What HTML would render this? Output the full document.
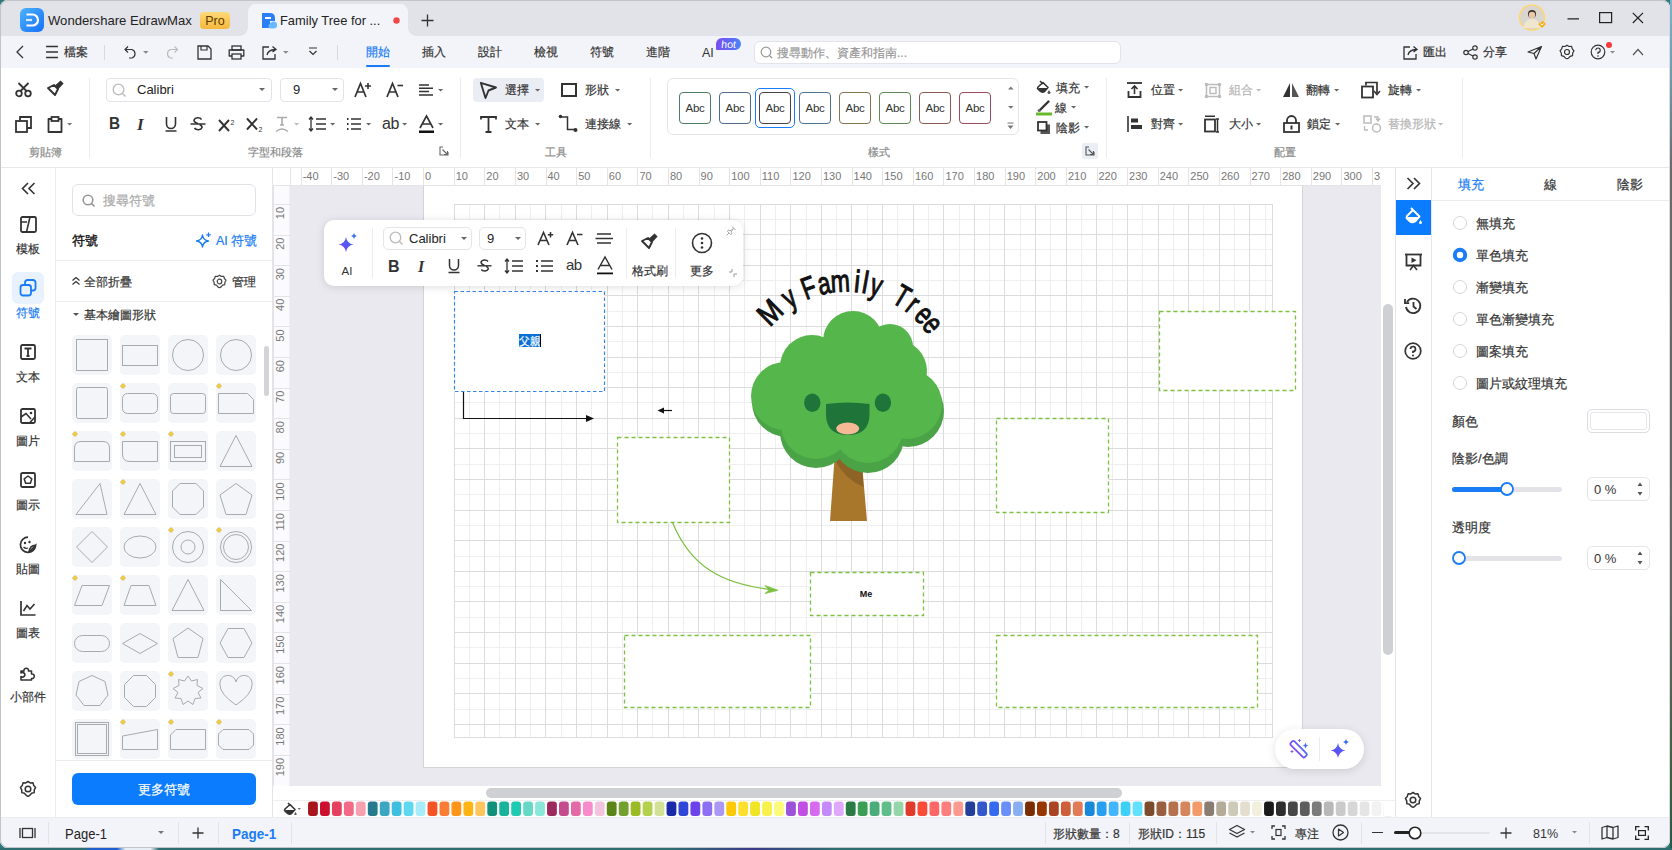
<!DOCTYPE html>
<html><head><meta charset="utf-8">
<style>
*{box-sizing:border-box;margin:0;padding:0}
html,body{width:1672px;height:850px;overflow:hidden;font-family:"Liberation Sans",sans-serif;color:#333}
body{background:#2f7a78;position:relative}
.a{position:absolute}
.t{position:absolute;white-space:nowrap;line-height:1;-webkit-text-stroke:0.2px currentColor}
svg{position:absolute;overflow:visible}

</style></head><body>
<div class="a" style="left:0;top:0;width:1670px;height:848px;border-radius:8px;overflow:hidden;background:#fff">
<div class="a" style="left:0px;top:0px;width:1670px;height:36px;background:#e2e3e8"></div>
<div class="a" style="left:0px;top:36px;width:1670px;height:32px;background:#f3f4f9"></div>
<div class="a" style="left:0px;top:68px;width:1670px;height:100px;background:#fff;border-bottom:1px solid #e8e8ec"></div>
<div class="a" style="left:0px;top:817px;width:1670px;height:31px;background:#f3f4f9;border-top:1px solid #ececf0"></div>
<div class="a" style="left:20px;top:8px;width:24px;height:24px;border-radius:6px;background:linear-gradient(135deg,#4cb2ff,#1670f7)"></div>
<svg style="left:20px;top:8px;" width="24" height="24" viewBox="0 0 24 24"><path d="M6.5 6.5 H12.5 A5.5 5.5 0 0 1 12.5 17.5 H6.5" fill="none" stroke="#fff" stroke-width="2.2"/><path d="M6 12 H12" stroke="#fff" stroke-width="2.2" opacity="0.8"/></svg>
<div class="t" style="left:48px;top:8.5px;height:24px;line-height:24px;font-size:13.1px;color:#222;font-weight:normal;-webkit-text-stroke:0;">Wondershare EdrawMax</div>
<div class="a" style="left:200px;top:12px;width:30px;height:17px;border-radius:4px;background:linear-gradient(180deg,#ffd978,#f5b73c)"></div>
<div class="t" style="left:200.0px;width:30px;text-align:center;top:8.5px;height:24px;line-height:24px;font-size:12.5px;color:#5a3c00;font-weight:normal;-webkit-text-stroke:0;">Pro</div>
<div class="a" style="left:248px;top:4px;width:160px;height:32px;background:#f3f4f9;border-radius:8px 8px 0 0"></div>
<div class="a" style="left:240px;top:28px;width:8px;height:8px;background:radial-gradient(circle at 0 0,#e2e3e8 7.5px,#f3f4f9 8px)"></div>
<div class="a" style="left:408px;top:28px;width:8px;height:8px;background:radial-gradient(circle at 100% 0,#e2e3e8 7.5px,#f3f4f9 8px)"></div>
<svg style="left:261px;top:12px;" width="17" height="17" viewBox="0 0 17 17"><path d="M1 1 H9 Q14 1 14 6 V9 H1 Z M1 9 H9 V16 H1 Z" fill="#2a7ff6"/><rect x="4" y="5" width="6" height="2" fill="#fff"/><circle cx="12.5" cy="13" r="3.6" fill="#6ab8ff"/><circle cx="10" cy="14" r="2.5" fill="#6ab8ff"/></svg>
<div class="t" style="left:280px;top:8.5px;height:24px;line-height:24px;font-size:12.9px;color:#222;font-weight:normal;-webkit-text-stroke:0;">Family Tree for ...</div>
<svg style="left:393px;top:17px;" width="7" height="7" viewBox="0 0 7 7"><circle cx="3.5" cy="3.5" r="3.2" fill="#f04848"/></svg>
<svg style="left:421px;top:14px;" width="13" height="13" viewBox="0 0 13 13"><path d="M6.5 0.5 V12.5 M0.5 6.5 H12.5" stroke="#333" stroke-width="1.3"/></svg>
<svg style="left:1518px;top:4px;" width="30" height="30" viewBox="0 0 30 30"><circle cx="14" cy="13.5" r="12.5" fill="#d9d6cf" stroke="#ffd677" stroke-width="1.6"/><path d="M5 24 Q7 15 14 15 Q21 15 23 24 Z" fill="#efe6cf"/><circle cx="14" cy="10" r="4" fill="#3a3028"/><circle cx="14" cy="11" r="3.2" fill="#e8c8a8"/><path d="M20 20 L25 17 L28 20 L24 24 Z" fill="#f5b020"/><path d="M22.5 19.5 L24 21 L25.6 19.5" stroke="#fff" stroke-width="1" fill="none"/></svg>
<svg style="left:1567px;top:18px;" width="14" height="2" viewBox="0 0 14 2"><path d="M0.5 0.8 H12" stroke="#222" stroke-width="1.2"/></svg>
<svg style="left:1599px;top:12px;" width="14" height="12" viewBox="0 0 14 12"><rect x="0.6" y="0.6" width="12" height="10" fill="none" stroke="#222" stroke-width="1.2"/></svg>
<svg style="left:1632px;top:12px;" width="12" height="12" viewBox="0 0 12 12"><path d="M0.8 0.8 L11 11 M11 0.8 L0.8 11" stroke="#222" stroke-width="1.2"/></svg>
<svg style="left:15px;top:45px;" width="10" height="14" viewBox="0 0 10 14"><path d="M8 1 L2 7 L8 13" fill="none" stroke="#333" stroke-width="1.3"/></svg>
<svg style="left:45px;top:45px;" width="14" height="14" viewBox="0 0 14 14"><path d="M1 1.5 H13 M1 7 H13 M1 12.5 H13" stroke="#333" stroke-width="1.3"/></svg>
<div class="t" style="left:64px;top:40.0px;height:24px;line-height:24px;font-size:12px;color:#333;font-weight:normal;">檔案</div>
<div class="a" style="left:104px;top:45px;width:1px;height:15px;background:#d8d9de"></div>
<svg style="left:124px;top:45px;" width="14" height="14" viewBox="0 0 14 14"><path d="M4 1.5 L1 4.5 L4 7.5" fill="none" stroke="#333" stroke-width="1.2"/><path d="M1.5 4.5 H8 A4.5 4.5 0 0 1 8 13 H5" fill="none" stroke="#333" stroke-width="1.2"/></svg>
<svg style="left:143.2px;top:50.6px;" width="5.6" height="3.8" viewBox="0 0 5.6 3.8"><path d="M0 0 L5.6 0 L2.8 2.8 Z" fill="#888"/></svg>
<svg style="left:165px;top:45px;" width="14" height="14" viewBox="0 0 14 14"><path d="M9.5 1.5 L12.5 4.5 L9.5 7.5" fill="none" stroke="#bbb" stroke-width="1.2"/><path d="M12 4.5 H5.5 A4.5 4.5 0 0 0 5.5 13 H8" fill="none" stroke="#bbb" stroke-width="1.2"/></svg>
<svg style="left:197px;top:45px;" width="15" height="15" viewBox="0 0 15 15"><path d="M1 1 H11 L14 4 V14 H1 Z" fill="none" stroke="#333" stroke-width="1.3"/><path d="M4 1 V5 H10 V1" fill="none" stroke="#333" stroke-width="1.2"/></svg>
<svg style="left:228px;top:45px;" width="17" height="15" viewBox="0 0 17 15"><rect x="4" y="1" width="9" height="4" fill="none" stroke="#333" stroke-width="1.3"/><path d="M4 11 H1.2 V5 H15.8 V11 H13" fill="none" stroke="#333" stroke-width="1.3" stroke-linejoin="round"/><rect x="4" y="9" width="9" height="5" fill="none" stroke="#333" stroke-width="1.3"/></svg>
<svg style="left:262px;top:45px;" width="16" height="15" viewBox="0 0 16 15"><path d="M7 2 H1 V14 H13 V9" fill="none" stroke="#333" stroke-width="1.3"/><path d="M5 10 Q6 5 13 4.5 M10.5 1.5 L14 4.5 L10.5 7" fill="none" stroke="#333" stroke-width="1.3"/></svg>
<svg style="left:283.2px;top:50.6px;" width="5.6" height="3.8" viewBox="0 0 5.6 3.8"><path d="M0 0 L5.6 0 L2.8 2.8 Z" fill="#888"/></svg>
<svg style="left:308px;top:47px;" width="10" height="10" viewBox="0 0 10 10"><path d="M1 1 H9 M1.5 4 L5 7.5 L8.5 4" fill="none" stroke="#333" stroke-width="1.2"/></svg>
<div class="a" style="left:337px;top:45px;width:1px;height:15px;background:#d8d9de"></div>
<div class="t" style="left:366px;top:40.0px;height:24px;line-height:24px;font-size:12px;color:#1a7cf6;font-weight:normal;">開始</div>
<div class="t" style="left:422px;top:40.0px;height:24px;line-height:24px;font-size:12px;color:#333;font-weight:normal;">插入</div>
<div class="t" style="left:478px;top:40.0px;height:24px;line-height:24px;font-size:12px;color:#333;font-weight:normal;">設計</div>
<div class="t" style="left:534px;top:40.0px;height:24px;line-height:24px;font-size:12px;color:#333;font-weight:normal;">檢視</div>
<div class="t" style="left:590px;top:40.0px;height:24px;line-height:24px;font-size:12px;color:#333;font-weight:normal;">符號</div>
<div class="t" style="left:646px;top:40.0px;height:24px;line-height:24px;font-size:12px;color:#333;font-weight:normal;">進階</div>
<div class="a" style="left:366px;top:65px;width:24px;height:2px;background:#1a7cf6;border-radius:1px"></div>
<div class="t" style="left:702px;top:40.5px;height:24px;line-height:24px;font-size:12.5px;color:#333;font-weight:normal;-webkit-text-stroke:0;">AI</div>
<div class="a" style="left:716px;top:38px;width:25px;height:12px;border-radius:6px 6px 6px 1px;background:linear-gradient(90deg,#7a4ef0,#5a6ff6 70%,#4b86f7)"></div>
<div class="t" style="left:716.0px;width:25px;text-align:center;top:32.0px;height:24px;line-height:24px;font-size:10.5px;color:#fff;font-weight:normal;-webkit-text-stroke:0;font-style:italic;transform:skewX(6deg)">hot</div>
<div class="a" style="left:754px;top:41px;width:367px;height:23px;background:#fff;border:1px solid #e3e4ea;border-radius:6px"></div>
<svg style="left:760px;top:46px;" width="13" height="13" viewBox="0 0 13 13"><circle cx="6" cy="6" r="4.8" fill="none" stroke="#999" stroke-width="1.2"/><path d="M9.5 9.5 L12 12" stroke="#999" stroke-width="1.2"/></svg>
<div class="t" style="left:777px;top:41.0px;height:24px;line-height:24px;font-size:12px;color:#999;font-weight:normal;">搜尋動作、資產和指南...</div>
<svg style="left:1403px;top:45px;" width="16" height="15" viewBox="0 0 16 15"><path d="M7 2 H1 V14 H13 V9" fill="none" stroke="#333" stroke-width="1.3"/><path d="M5 10 Q6 5 13 4.5 M10.5 1.5 L14 4.5 L10.5 7" fill="none" stroke="#333" stroke-width="1.3"/></svg>
<div class="t" style="left:1423px;top:40.0px;height:24px;line-height:24px;font-size:12px;color:#333;font-weight:normal;">匯出</div>
<svg style="left:1463px;top:45px;" width="16" height="15" viewBox="0 0 16 15"><circle cx="3" cy="7.5" r="2.2" fill="none" stroke="#333" stroke-width="1.2"/><circle cx="12" cy="3" r="2.2" fill="none" stroke="#333" stroke-width="1.2"/><circle cx="12" cy="12" r="2.2" fill="none" stroke="#333" stroke-width="1.2"/><path d="M5 6.5 L10 4 M5 8.5 L10 11" stroke="#333" stroke-width="1.2"/></svg>
<div class="t" style="left:1483px;top:40.0px;height:24px;line-height:24px;font-size:12px;color:#333;font-weight:normal;">分享</div>
<svg style="left:1527px;top:45px;" width="16" height="15" viewBox="0 0 16 15"><path d="M1 7 L14.5 1.5 L9 14 L7 8.5 Z M7 8.5 L14.5 1.5" fill="none" stroke="#333" stroke-width="1.2" stroke-linejoin="round"/></svg>
<svg style="left:1559px;top:44px;" width="16" height="16" viewBox="0 0 16 16"><path d="M8 1.2 L10 2.5 L12.6 2.3 L13.3 4.8 L15 6.8 L13.7 9 L13.6 11.6 L11.1 12.3 L9.3 14.3 L8 14.8 L6.7 14.3 L4.9 12.3 L2.4 11.6 L2.3 9 L1 6.8 L2.7 4.8 L3.4 2.3 L6 2.5 Z" fill="none" stroke="#333" stroke-width="1.2" stroke-linejoin="round"/><circle cx="8" cy="8" r="2.5" fill="none" stroke="#333" stroke-width="1.2"/></svg>
<svg style="left:1590px;top:44px;" width="16" height="16" viewBox="0 0 16 16"><circle cx="8" cy="8" r="6.8" fill="none" stroke="#333" stroke-width="1.2"/><path d="M5.8 6.2 A2.2 2.2 0 1 1 8 8.4 V10" fill="none" stroke="#333" stroke-width="1.2"/><circle cx="8" cy="12" r="0.8" fill="#333"/></svg>
<svg style="left:1606px;top:42px;" width="6" height="6" viewBox="0 0 6 6"><circle cx="3" cy="3" r="3" fill="#f23b3b"/></svg>
<svg style="left:1609.5px;top:51.25px;" width="5.0" height="3.5" viewBox="0 0 5.0 3.5"><path d="M0 0 L5.0 0 L2.5 2.5 Z" fill="#888"/></svg>
<svg style="left:1632px;top:48px;" width="12" height="8" viewBox="0 0 12 8"><path d="M1 7 L6 1.5 L11 7" fill="none" stroke="#555" stroke-width="1.2"/></svg>
<svg style="left:15px;top:82px;" width="18" height="16" viewBox="0 0 18 16"><circle cx="4" cy="11.5" r="2.8" fill="none" stroke="#333" stroke-width="1.8"/><circle cx="13" cy="11.5" r="2.8" fill="none" stroke="#333" stroke-width="1.8"/><path d="M5.5 9 L13.5 1 M11.5 9 L3.5 1" stroke="#333" stroke-width="1.8"/></svg>
<svg style="left:46px;top:80px;" width="18" height="18" viewBox="0 0 18 18"><path d="M2 8 L9 15 L12 9 L8 5 Z" fill="none" stroke="#333" stroke-width="1.9" stroke-linejoin="round"/><path d="M9 6.5 L14.5 1.5 L16.5 3.5 L11.5 9" fill="#333" stroke="#333" stroke-width="1.6"/></svg>
<svg style="left:15px;top:116px;" width="17" height="17" viewBox="0 0 17 17"><rect x="1" y="5" width="11" height="11" fill="none" stroke="#333" stroke-width="1.8"/><path d="M5 4.5 V1 H16 V12 H12.5" fill="none" stroke="#333" stroke-width="1.8"/></svg>
<svg style="left:47px;top:116px;" width="16" height="17" viewBox="0 0 16 17"><path d="M4 3 H1.5 V16 H14.5 V3 H12" fill="none" stroke="#333" stroke-width="1.8" stroke-linejoin="round"/><rect x="4.5" y="1" width="7" height="4" fill="none" stroke="#333" stroke-width="1.8"/></svg>
<svg style="left:66.9px;top:123.2px;" width="5.2" height="3.6" viewBox="0 0 5.2 3.6"><path d="M0 0 L5.2 0 L2.6 2.6 Z" fill="#777"/></svg>
<div class="t" style="left:15.5px;width:60px;text-align:center;top:140.0px;height:24px;line-height:24px;font-size:11px;color:#8a8a8a;font-weight:normal;">剪貼簿</div>
<div class="a" style="left:89px;top:78px;width:1px;height:80px;background:#ebebef"></div>
<div class="a" style="left:106px;top:78px;width:166px;height:24px;background:#fff;border:1px solid #e2e3e8;border-radius:4px"></div>
<svg style="left:112px;top:83px;" width="15" height="15" viewBox="0 0 15 15"><circle cx="6.5" cy="6.5" r="5.3" fill="none" stroke="#bbb" stroke-width="1.3"/><path d="M10.5 10.5 L13.5 13.5" stroke="#bbb" stroke-width="1.4"/></svg>
<div class="t" style="left:137px;top:78.0px;height:24px;line-height:24px;font-size:13px;color:#222;font-weight:normal;-webkit-text-stroke:0;">Calibri</div>
<svg style="left:259px;top:88.0px;" width="6" height="4" viewBox="0 0 6 4"><path d="M0 0 L6 0 L3 3 Z" fill="#666"/></svg>
<div class="a" style="left:280px;top:78px;width:64px;height:24px;background:#fff;border:1px solid #e2e3e8;border-radius:4px"></div>
<div class="t" style="left:293px;top:78.0px;height:24px;line-height:24px;font-size:13px;color:#222;font-weight:normal;-webkit-text-stroke:0;">9</div>
<svg style="left:332px;top:88.0px;" width="6" height="4" viewBox="0 0 6 4"><path d="M0 0 L6 0 L3 3 Z" fill="#666"/></svg>
<svg style="left:354px;top:82px;" width="18" height="16" viewBox="0 0 18 16"><path d="M1 15 L6.5 1.5 L12 15 M3 10 H10" fill="none" stroke="#333" stroke-width="1.7"/><path d="M14 1 V7 M11 4 H17" stroke="#333" stroke-width="1.6"/></svg>
<svg style="left:386px;top:82px;" width="18" height="16" viewBox="0 0 18 16"><path d="M1 15 L6.5 1.5 L12 15 M3 10 H10" fill="none" stroke="#333" stroke-width="1.7"/><path d="M11.5 3.5 H17" stroke="#333" stroke-width="1.6"/></svg>
<svg style="left:419px;top:84px;" width="15" height="12" viewBox="0 0 15 12"><path d="M0 1 H10 M0 4.3 H14 M0 7.6 H10 M0 11 H14" stroke="#333" stroke-width="1.5"/></svg>
<svg style="left:437.9px;top:88.7px;" width="5.2" height="3.6" viewBox="0 0 5.2 3.6"><path d="M0 0 L5.2 0 L2.6 2.6 Z" fill="#666"/></svg>
<div class="t" style="left:109px;top:112.0px;height:24px;line-height:24px;font-size:17px;color:#333;font-weight:normal;-webkit-text-stroke:0;font-weight:bold;transform:scaleX(0.9);transform-origin:left">B</div>
<div class="t" style="left:137px;top:112.5px;height:24px;line-height:24px;font-size:17px;color:#333;font-weight:normal;-webkit-text-stroke:0;font-family:'Liberation Serif';font-weight:bold"><i>I</i></div>
<svg style="left:165px;top:116px;" width="12" height="16" viewBox="0 0 12 16"><path d="M1.5 1 V8 A4.5 4.5 0 0 0 10.5 8 V1 M0.5 15 H11.5" fill="none" stroke="#333" stroke-width="1.6"/></svg>
<svg style="left:190px;top:116px;" width="16" height="16" viewBox="0 0 16 16"><path d="M11.5 3.5 A4 3 0 0 0 4 4 C4 6 6 7 8 7.5 M4.5 12 A4 3 0 0 0 12 11.5 C12 10 11 9 9.5 8.5" fill="none" stroke="#333" stroke-width="1.6"/><path d="M0.5 8 H15.5" stroke="#333" stroke-width="1.5"/></svg>
<svg style="left:218px;top:117px;" width="18" height="15" viewBox="0 0 18 15"><path d="M1 3 L11 14 M11 3 L1 14" stroke="#333" stroke-width="1.9"/><text x="12.5" y="8" font-size="7" fill="#333" font-family="Liberation Sans">2</text></svg>
<svg style="left:246px;top:117px;" width="18" height="16" viewBox="0 0 18 16"><path d="M1 1.5 L11 12.5 M11 1.5 L1 12.5" stroke="#333" stroke-width="1.9"/><text x="12.5" y="15" font-size="7" fill="#333" font-family="Liberation Sans">2</text></svg>
<svg style="left:275px;top:116px;" width="16" height="17" viewBox="0 0 16 17"><path d="M2 1.5 H12 M7 1.5 V9 M5 9 H9" fill="none" stroke="#aaa" stroke-width="1.6"/><path d="M1 15.5 Q7 10.5 13 15.5" fill="none" stroke="#aaa" stroke-width="1.4"/></svg>
<svg style="left:293.9px;top:123.2px;" width="5.2" height="3.6" viewBox="0 0 5.2 3.6"><path d="M0 0 L5.2 0 L2.6 2.6 Z" fill="#bbb"/></svg>
<svg style="left:308px;top:116px;" width="20" height="16" viewBox="0 0 20 16"><path d="M3 1 V15 M1 3.5 L3 1 L5 3.5 M1 12.5 L3 15 L5 12.5" fill="none" stroke="#333" stroke-width="1.3"/><path d="M8 3 H18 M8 8 H18 M8 13 H18" stroke="#333" stroke-width="1.7"/></svg>
<svg style="left:329.9px;top:123.2px;" width="5.2" height="3.6" viewBox="0 0 5.2 3.6"><path d="M0 0 L5.2 0 L2.6 2.6 Z" fill="#666"/></svg>
<svg style="left:346px;top:117px;" width="16" height="14" viewBox="0 0 16 14"><path d="M1 2 H2.5 M1 7 H2.5 M1 12 H2.5" stroke="#333" stroke-width="1.8"/><path d="M5 2 H15 M5 7 H15 M5 12 H15" stroke="#333" stroke-width="1.7"/></svg>
<svg style="left:365.9px;top:123.2px;" width="5.2" height="3.6" viewBox="0 0 5.2 3.6"><path d="M0 0 L5.2 0 L2.6 2.6 Z" fill="#666"/></svg>
<div class="t" style="left:382px;top:112.0px;height:24px;line-height:24px;font-size:16px;color:#333;font-weight:normal;-webkit-text-stroke:0;letter-spacing:-0.5px">ab</div>
<svg style="left:402.4px;top:123.2px;" width="5.2" height="3.6" viewBox="0 0 5.2 3.6"><path d="M0 0 L5.2 0 L2.6 2.6 Z" fill="#666"/></svg>
<svg style="left:418px;top:115px;" width="17" height="19" viewBox="0 0 17 19"><path d="M2 13 L8.5 1 L15 13 M4.5 9 H12.5" fill="none" stroke="#333" stroke-width="1.6"/><rect x="1" y="15.5" width="15" height="2.5" fill="#111"/></svg>
<svg style="left:438.4px;top:123.2px;" width="5.2" height="3.6" viewBox="0 0 5.2 3.6"><path d="M0 0 L5.2 0 L2.6 2.6 Z" fill="#666"/></svg>
<div class="t" style="left:235.5px;width:80px;text-align:center;top:140.0px;height:24px;line-height:24px;font-size:11px;color:#8a8a8a;font-weight:normal;">字型和段落</div>
<svg style="left:439px;top:146px;" width="10" height="10" viewBox="0 0 10 10"><path d="M4 1 H1 V9 H9 V6 M3.5 3.5 L8.5 8.5 M5 8.5 H8.5 V5" fill="none" stroke="#666" stroke-width="1.1"/></svg>
<div class="a" style="left:460px;top:78px;width:1px;height:80px;background:#ebebef"></div>
<div class="a" style="left:473px;top:78px;width:71px;height:24px;background:#ebedf5;border-radius:4px"></div>
<svg style="left:479px;top:81px;" width="19" height="19" viewBox="0 0 19 19"><path d="M1.8 1.8 L17 6.5 L9.5 9.5 L6.5 17 Z" fill="none" stroke="#333" stroke-width="1.9" stroke-linejoin="round"/></svg>
<div class="t" style="left:505px;top:78.0px;height:24px;line-height:24px;font-size:12px;color:#333;font-weight:normal;">選擇</div>
<svg style="left:534.9px;top:88.7px;" width="5.2" height="3.6" viewBox="0 0 5.2 3.6"><path d="M0 0 L5.2 0 L2.6 2.6 Z" fill="#666"/></svg>
<div class="a" style="left:561px;top:83px;width:16px;height:14px;border:2px solid #333"></div>
<div class="t" style="left:585px;top:78.0px;height:24px;line-height:24px;font-size:12px;color:#333;font-weight:normal;">形狀</div>
<svg style="left:614.9px;top:88.7px;" width="5.2" height="3.6" viewBox="0 0 5.2 3.6"><path d="M0 0 L5.2 0 L2.6 2.6 Z" fill="#666"/></svg>
<svg style="left:480px;top:116px;" width="17" height="17" viewBox="0 0 17 17"><path d="M1 3.5 V1 H16 V3.5 M8.5 1 V16 M5.5 16 H11.5" fill="none" stroke="#333" stroke-width="1.8"/></svg>
<div class="t" style="left:505px;top:112.0px;height:24px;line-height:24px;font-size:12px;color:#333;font-weight:normal;">文本</div>
<svg style="left:534.9px;top:123.2px;" width="5.2" height="3.6" viewBox="0 0 5.2 3.6"><path d="M0 0 L5.2 0 L2.6 2.6 Z" fill="#666"/></svg>
<svg style="left:558px;top:114px;" width="21" height="20" viewBox="0 0 21 20"><circle cx="2.5" cy="2.5" r="1.8" fill="#333"/><path d="M3.5 3 H9.5 V15.5 H17" fill="none" stroke="#333" stroke-width="1.5"/><circle cx="17.5" cy="16" r="2" fill="#333"/></svg>
<div class="t" style="left:585px;top:112.0px;height:24px;line-height:24px;font-size:12px;color:#333;font-weight:normal;">連接線</div>
<svg style="left:626.9px;top:123.2px;" width="5.2" height="3.6" viewBox="0 0 5.2 3.6"><path d="M0 0 L5.2 0 L2.6 2.6 Z" fill="#666"/></svg>
<div class="t" style="left:526.0px;width:60px;text-align:center;top:140.0px;height:24px;line-height:24px;font-size:11px;color:#8a8a8a;font-weight:normal;">工具</div>
<div class="a" style="left:650px;top:78px;width:1px;height:80px;background:#ebebef"></div>
<div class="a" style="left:667px;top:78px;width:352px;height:57px;border:1px solid #e6e6ea;border-radius:6px"></div>
<div class="a" style="left:679px;top:92px;width:32px;height:32px;border:1px solid #4f7e66;border-radius:4px"></div>
<div class="t" style="left:679.0px;width:32px;text-align:center;top:96.0px;height:24px;line-height:24px;font-size:11.5px;color:#333;font-weight:normal;-webkit-text-stroke:0;letter-spacing:-0.3px">Abc</div>
<div class="a" style="left:719px;top:92px;width:32px;height:32px;border:1px solid #4f6a8a;border-radius:4px"></div>
<div class="t" style="left:719.0px;width:32px;text-align:center;top:96.0px;height:24px;line-height:24px;font-size:11.5px;color:#333;font-weight:normal;-webkit-text-stroke:0;letter-spacing:-0.3px">Abc</div>
<div class="a" style="left:759px;top:92px;width:32px;height:32px;border:1px solid #444;border-radius:4px"></div>
<div class="t" style="left:759.0px;width:32px;text-align:center;top:96.0px;height:24px;line-height:24px;font-size:11.5px;color:#333;font-weight:normal;-webkit-text-stroke:0;letter-spacing:-0.3px">Abc</div>
<div class="a" style="left:799px;top:92px;width:32px;height:32px;border:1px solid #4e7092;border-radius:4px"></div>
<div class="t" style="left:799.0px;width:32px;text-align:center;top:96.0px;height:24px;line-height:24px;font-size:11.5px;color:#333;font-weight:normal;-webkit-text-stroke:0;letter-spacing:-0.3px">Abc</div>
<div class="a" style="left:839px;top:92px;width:32px;height:32px;border:1px solid #84744f;border-radius:4px"></div>
<div class="t" style="left:839.0px;width:32px;text-align:center;top:96.0px;height:24px;line-height:24px;font-size:11.5px;color:#333;font-weight:normal;-webkit-text-stroke:0;letter-spacing:-0.3px">Abc</div>
<div class="a" style="left:879px;top:92px;width:32px;height:32px;border:1px solid #5e8856;border-radius:4px"></div>
<div class="t" style="left:879.0px;width:32px;text-align:center;top:96.0px;height:24px;line-height:24px;font-size:11.5px;color:#333;font-weight:normal;-webkit-text-stroke:0;letter-spacing:-0.3px">Abc</div>
<div class="a" style="left:919px;top:92px;width:32px;height:32px;border:1px solid #8c5a55;border-radius:4px"></div>
<div class="t" style="left:919.0px;width:32px;text-align:center;top:96.0px;height:24px;line-height:24px;font-size:11.5px;color:#333;font-weight:normal;-webkit-text-stroke:0;letter-spacing:-0.3px">Abc</div>
<div class="a" style="left:959px;top:92px;width:32px;height:32px;border:1px solid #9a4a5c;border-radius:4px"></div>
<div class="t" style="left:959.0px;width:32px;text-align:center;top:96.0px;height:24px;line-height:24px;font-size:11.5px;color:#333;font-weight:normal;-webkit-text-stroke:0;letter-spacing:-0.3px">Abc</div>
<div class="a" style="left:755px;top:88px;width:40px;height:40px;border:1.5px solid #1a7cf6;border-radius:5px"></div>
<svg style="left:1007.7px;top:86px;" width="6" height="4" viewBox="0 0 6 4"><path d="M0 3.5 L5.6 3.5 L2.8 0.5 Z" fill="#777"/></svg>
<svg style="left:1007.7px;top:106.1px;" width="5.6" height="3.8" viewBox="0 0 5.6 3.8"><path d="M0 0 L5.6 0 L2.8 2.8 Z" fill="#777"/></svg>
<svg style="left:1007px;top:122px;" width="7" height="8" viewBox="0 0 7 8"><path d="M0.5 1 H6.5" stroke="#777" stroke-width="1"/><path d="M0.5 3.5 H6.5 L3.5 7 Z" fill="#777"/></svg>
<div class="t" style="left:849.0px;width:60px;text-align:center;top:140.0px;height:24px;line-height:24px;font-size:11px;color:#8a8a8a;font-weight:normal;">樣式</div>
<svg style="left:1036px;top:80px;" width="15" height="14" viewBox="0 0 15 14"><path d="M4 1 L7 4 M2 7 L7 2.5 L12 7.5 L8.5 11.5 Q6 13 4 11 L1.5 8.5 Z" fill="none" stroke="#333" stroke-width="1.6" stroke-linejoin="round"/><path d="M2 8 H11.5 L8.5 11.5 Q6 13 4 11 Z" fill="#333"/><path d="M13 10 L14.5 12.5 A1.5 1.5 0 0 1 11.5 12.5 Z" fill="#555"/></svg>
<div class="t" style="left:1056px;top:75.5px;height:24px;line-height:24px;font-size:12px;color:#333;font-weight:normal;">填充</div>
<svg style="left:1084.4px;top:86.2px;" width="5.2" height="3.6" viewBox="0 0 5.2 3.6"><path d="M0 0 L5.2 0 L2.6 2.6 Z" fill="#666"/></svg>
<svg style="left:1036px;top:100px;" width="16" height="17" viewBox="0 0 16 17"><path d="M12.5 1.5 L4 10" stroke="#333" stroke-width="2.4" stroke-linecap="round"/><circle cx="3.2" cy="10.5" r="1.6" fill="#666"/><rect x="0" y="12.5" width="16" height="3" fill="#6ab82a"/></svg>
<div class="t" style="left:1055px;top:95.5px;height:24px;line-height:24px;font-size:12px;color:#333;font-weight:normal;">線</div>
<svg style="left:1070.9px;top:106.2px;" width="5.2" height="3.6" viewBox="0 0 5.2 3.6"><path d="M0 0 L5.2 0 L2.6 2.6 Z" fill="#666"/></svg>
<svg style="left:1037px;top:121px;" width="13" height="13" viewBox="0 0 13 13"><rect x="3.5" y="3.5" width="9.5" height="9.5" fill="#555"/><rect x="1" y="1" width="8.5" height="8.5" fill="#fff" stroke="#333" stroke-width="1.8"/></svg>
<div class="t" style="left:1056px;top:115.5px;height:24px;line-height:24px;font-size:12px;color:#333;font-weight:normal;">陰影</div>
<svg style="left:1084.4px;top:126.2px;" width="5.2" height="3.6" viewBox="0 0 5.2 3.6"><path d="M0 0 L5.2 0 L2.6 2.6 Z" fill="#666"/></svg>
<div class="a" style="left:1082px;top:143px;width:16px;height:16px;background:#eceef5;border-radius:2px"></div>
<svg style="left:1085px;top:146px;" width="10" height="10" viewBox="0 0 10 10"><path d="M4 1 H1 V9 H9 V6 M3.5 3.5 L8.5 8.5 M5 8.5 H8.5 V5" fill="none" stroke="#555" stroke-width="1.1"/></svg>
<div class="a" style="left:1106px;top:78px;width:1px;height:80px;background:#ebebef"></div>
<svg style="left:1126px;top:82px;" width="17" height="16" viewBox="0 0 17 16"><path d="M1 1 H16" stroke="#333" stroke-width="1.8"/><path d="M8.5 12 V4 M5.5 7 L8.5 4 L11.5 7" fill="none" stroke="#333" stroke-width="1.6"/><path d="M2.5 9 V15 H14.5 V9" fill="none" stroke="#333" stroke-width="1.8"/></svg>
<div class="t" style="left:1151px;top:78.0px;height:24px;line-height:24px;font-size:12px;color:#333;font-weight:normal;">位置</div>
<svg style="left:1178.4px;top:88.7px;" width="5.2" height="3.6" viewBox="0 0 5.2 3.6"><path d="M0 0 L5.2 0 L2.6 2.6 Z" fill="#666"/></svg>
<svg style="left:1204px;top:82px;" width="18" height="17" viewBox="0 0 18 17"><rect x="2.5" y="2.5" width="13" height="12" fill="none" stroke="#bbb" stroke-width="1.5"/><rect x="6" y="5.5" width="6" height="6" fill="none" stroke="#bbb" stroke-width="1.4"/><circle cx="2.5" cy="2.5" r="1.8" fill="#bbb"/><circle cx="15.5" cy="2.5" r="1.8" fill="#bbb"/><circle cx="2.5" cy="14.5" r="1.8" fill="#bbb"/><circle cx="15.5" cy="14.5" r="1.8" fill="#bbb"/></svg>
<div class="t" style="left:1229px;top:78.0px;height:24px;line-height:24px;font-size:12px;color:#b5b5b5;font-weight:normal;">組合</div>
<svg style="left:1255.9px;top:88.7px;" width="5.2" height="3.6" viewBox="0 0 5.2 3.6"><path d="M0 0 L5.2 0 L2.6 2.6 Z" fill="#bbb"/></svg>
<svg style="left:1282px;top:82px;" width="18" height="16" viewBox="0 0 18 16"><path d="M8 1 V15 H1 Z" fill="#333"/><path d="M10 1 V15 H17 Z" fill="#555"/></svg>
<div class="t" style="left:1306px;top:78.0px;height:24px;line-height:24px;font-size:12px;color:#333;font-weight:normal;">翻轉</div>
<svg style="left:1334.4px;top:88.7px;" width="5.2" height="3.6" viewBox="0 0 5.2 3.6"><path d="M0 0 L5.2 0 L2.6 2.6 Z" fill="#666"/></svg>
<svg style="left:1361px;top:81px;" width="21" height="18" viewBox="0 0 21 18"><rect x="1" y="5.5" width="11" height="11" fill="none" stroke="#333" stroke-width="1.8"/><path d="M5 4.5 V1.5 H16 V12" fill="none" stroke="#333" stroke-width="1.7"/><path d="M13 10 L16 13.5 L19 10" fill="none" stroke="#333" stroke-width="1.5"/></svg>
<div class="t" style="left:1388px;top:78.0px;height:24px;line-height:24px;font-size:12px;color:#333;font-weight:normal;">旋轉</div>
<svg style="left:1415.9px;top:88.7px;" width="5.2" height="3.6" viewBox="0 0 5.2 3.6"><path d="M0 0 L5.2 0 L2.6 2.6 Z" fill="#666"/></svg>
<svg style="left:1127px;top:115px;" width="16" height="18" viewBox="0 0 16 18"><path d="M1 1 V17" stroke="#333" stroke-width="1.6"/><rect x="4" y="3.5" width="7" height="4" fill="#333"/><rect x="4" y="10" width="11" height="4" fill="#333"/></svg>
<div class="t" style="left:1151px;top:112.0px;height:24px;line-height:24px;font-size:12px;color:#333;font-weight:normal;">對齊</div>
<svg style="left:1178.4px;top:123.2px;" width="5.2" height="3.6" viewBox="0 0 5.2 3.6"><path d="M0 0 L5.2 0 L2.6 2.6 Z" fill="#666"/></svg>
<svg style="left:1204px;top:115px;" width="18" height="18" viewBox="0 0 18 18"><rect x="1" y="4.5" width="10" height="12" fill="none" stroke="#333" stroke-width="1.8"/><path d="M1 1.2 H11 M13.5 4 V17 M12 4 H15 M12 17 H15" stroke="#333" stroke-width="1.5"/></svg>
<div class="t" style="left:1229px;top:112.0px;height:24px;line-height:24px;font-size:12px;color:#333;font-weight:normal;">大小</div>
<svg style="left:1255.9px;top:123.2px;" width="5.2" height="3.6" viewBox="0 0 5.2 3.6"><path d="M0 0 L5.2 0 L2.6 2.6 Z" fill="#666"/></svg>
<svg style="left:1283px;top:115px;" width="17" height="18" viewBox="0 0 17 18"><path d="M4 8 V5.5 A4.5 4.5 0 0 1 13 5.5 V8" fill="none" stroke="#333" stroke-width="1.8"/><rect x="1" y="8" width="15" height="9" fill="none" stroke="#333" stroke-width="1.8"/><rect x="7.5" y="10.5" width="2" height="4" fill="#333"/></svg>
<div class="t" style="left:1307px;top:112.0px;height:24px;line-height:24px;font-size:12px;color:#333;font-weight:normal;">鎖定</div>
<svg style="left:1335.4px;top:123.2px;" width="5.2" height="3.6" viewBox="0 0 5.2 3.6"><path d="M0 0 L5.2 0 L2.6 2.6 Z" fill="#666"/></svg>
<svg style="left:1363px;top:115px;" width="19" height="18" viewBox="0 0 19 18"><rect x="1" y="1" width="7" height="7" fill="none" stroke="#bbb" stroke-width="1.5"/><circle cx="13.5" cy="13" r="4" fill="none" stroke="#bbb" stroke-width="1.5"/><path d="M11 2 H15 V6 M13 3.5 L15 6 L17 3.5 M1.5 11 V15 H5" fill="none" stroke="#bbb" stroke-width="1.3"/></svg>
<div class="t" style="left:1388px;top:112.0px;height:24px;line-height:24px;font-size:12px;color:#b5b5b5;font-weight:normal;">替換形狀</div>
<svg style="left:1438.4px;top:123.2px;" width="5.2" height="3.6" viewBox="0 0 5.2 3.6"><path d="M0 0 L5.2 0 L2.6 2.6 Z" fill="#bbb"/></svg>
<div class="t" style="left:1254.5px;width:60px;text-align:center;top:140.0px;height:24px;line-height:24px;font-size:11px;color:#8a8a8a;font-weight:normal;">配置</div>
<div class="a" style="left:1462px;top:78px;width:1px;height:80px;background:#ebebef"></div>
<div class="a" style="left:0px;top:168px;width:56px;height:649px;background:#fff;border-right:1px solid #ededf1"></div>
<div class="a" style="left:56px;top:168px;width:217px;height:649px;background:#fff;border-right:1px solid #e4e4e8"></div>
<svg style="left:21px;top:182px;" width="15" height="13" viewBox="0 0 15 13"><path d="M7 1 L1.5 6.5 L7 12 M13.5 1 L8 6.5 L13.5 12" fill="none" stroke="#333" stroke-width="1.6"/></svg>
<svg style="left:20px;top:216px;" width="17" height="17" viewBox="0 0 17 17"><rect x="1" y="1" width="15" height="15" rx="1.5" fill="none" stroke="#333" stroke-width="1.8"/><path d="M1 6 H7 M10 1 L6.5 16" fill="none" stroke="#333" stroke-width="1.6"/></svg>
<div class="t" style="left:3.0px;width:50px;text-align:center;top:236.5px;height:24px;line-height:24px;font-size:12px;color:#333;font-weight:normal;">模板</div>
<div class="a" style="left:12px;top:272px;width:32px;height:32px;background:#e8f1fe;border-radius:6px"></div>
<svg style="left:19px;top:279px;" width="18" height="18" viewBox="0 0 18 18"><path d="M6 5.5 V3.5 A2.5 2.5 0 0 1 8.5 1 H14 A2.5 2.5 0 0 1 16.5 3.5 V9 A2.5 2.5 0 0 1 14 11.5 H12" fill="none" stroke="#1a7cf6" stroke-width="1.8"/><rect x="1.5" y="6" width="10.5" height="10.5" rx="2.5" fill="none" stroke="#1a7cf6" stroke-width="1.8"/></svg>
<div class="t" style="left:3.0px;width:50px;text-align:center;top:300.5px;height:24px;line-height:24px;font-size:12px;color:#1a7cf6;font-weight:normal;">符號</div>
<svg style="left:20px;top:344px;" width="16" height="16" viewBox="0 0 16 16"><rect x="1" y="1" width="14" height="14" rx="1.5" fill="none" stroke="#333" stroke-width="1.8"/><path d="M4.5 4.5 H11.5 M8 4.5 V12 M6.5 12 H9.5" fill="none" stroke="#333" stroke-width="1.8"/></svg>
<div class="t" style="left:3.0px;width:50px;text-align:center;top:364.5px;height:24px;line-height:24px;font-size:12px;color:#333;font-weight:normal;">文本</div>
<svg style="left:20px;top:408px;" width="16" height="16" viewBox="0 0 16 16"><rect x="1" y="1" width="14" height="14" rx="1.5" fill="none" stroke="#333" stroke-width="1.8"/><path d="M1 9 L6 5.5 L11 11 M9.5 15 L15 9" fill="none" stroke="#333" stroke-width="1.6"/><circle cx="11" cy="5" r="1.3" fill="#333"/></svg>
<div class="t" style="left:3.0px;width:50px;text-align:center;top:428.5px;height:24px;line-height:24px;font-size:12px;color:#333;font-weight:normal;">圖片</div>
<svg style="left:20px;top:472px;" width="16" height="16" viewBox="0 0 16 16"><rect x="1" y="1" width="14" height="14" rx="1.5" fill="none" stroke="#333" stroke-width="1.8"/><path d="M8 4 L11.8 6.8 L10.4 11.3 H5.6 L4.2 6.8 Z" fill="none" stroke="#333" stroke-width="1.5" stroke-linejoin="round"/></svg>
<div class="t" style="left:3.0px;width:50px;text-align:center;top:492.5px;height:24px;line-height:24px;font-size:12px;color:#333;font-weight:normal;">圖示</div>
<svg style="left:19px;top:536px;" width="18" height="17" viewBox="0 0 18 17"><path d="M9 1.2 A7.6 7.6 0 1 0 16.6 9.5 L9.5 16.6" fill="none" stroke="#333" stroke-width="1.7"/><path d="M16.6 9.2 Q11 9 10 16" fill="none" stroke="#333" stroke-width="1.6"/><circle cx="6" cy="7" r="1.2" fill="#333"/><circle cx="10.5" cy="6" r="1.2" fill="#333"/><path d="M4.5 11 Q6.5 13 9 12" fill="none" stroke="#333" stroke-width="1.3"/></svg>
<div class="t" style="left:3.0px;width:50px;text-align:center;top:556.5px;height:24px;line-height:24px;font-size:12px;color:#333;font-weight:normal;">貼圖</div>
<svg style="left:20px;top:600px;" width="16" height="16" viewBox="0 0 16 16"><path d="M1 1 V15 H15.5" fill="none" stroke="#333" stroke-width="1.7"/><path d="M3.5 11 L7 5.5 L10 9 L14.5 4" fill="none" stroke="#333" stroke-width="1.6"/></svg>
<div class="t" style="left:3.0px;width:50px;text-align:center;top:620.5px;height:24px;line-height:24px;font-size:12px;color:#333;font-weight:normal;">圖表</div>
<svg style="left:19px;top:664px;" width="18" height="17" viewBox="0 0 18 17"><path d="M2 7 H5 A2.3 2.3 0 1 1 9.5 7 H12.5 V10 A2.3 2.3 0 1 1 12.5 14.5 V16 H2 V12.5 A2.3 2.3 0 1 0 2 9 Z" fill="none" stroke="#333" stroke-width="1.6" stroke-linejoin="round"/></svg>
<div class="t" style="left:0.0px;width:56px;text-align:center;top:684.5px;height:24px;line-height:24px;font-size:12px;color:#333;font-weight:normal;">小部件</div>
<svg style="left:19px;top:780px;" width="18" height="18" viewBox="0 0 18 18"><path d="M9 1.5 L11.2 2.9 L13.9 2.8 L14.7 5.4 L16.6 7.4 L15.3 9.8 L15.2 12.6 L12.6 13.3 L10.6 15.6 L9 16.2 L7.4 15.6 L5.4 13.3 L2.8 12.6 L2.7 9.8 L1.4 7.4 L3.3 5.4 L4.1 2.8 L6.8 2.9 Z" fill="none" stroke="#333" stroke-width="1.5" stroke-linejoin="round"/><circle cx="9" cy="9" r="2.8" fill="none" stroke="#333" stroke-width="1.5"/></svg>
<div class="a" style="left:72px;top:184px;width:184px;height:32px;background:#fff;border:1px solid #e1e2e8;border-radius:6px"></div>
<svg style="left:82px;top:194px;" width="14" height="14" viewBox="0 0 14 14"><circle cx="6" cy="6" r="4.8" fill="none" stroke="#999" stroke-width="1.6"/><path d="M9.5 9.5 L12.5 12.5" stroke="#999" stroke-width="1.7"/></svg>
<div class="t" style="left:103px;top:188.5px;height:24px;line-height:24px;font-size:13px;color:#aaa;font-weight:normal;">搜尋符號</div>
<div class="t" style="left:72px;top:228.5px;height:24px;line-height:24px;font-size:12.5px;color:#111;font-weight:normal;-webkit-text-stroke:0.35px #111">符號</div>
<svg style="left:196px;top:232px;" width="16" height="16" viewBox="0 0 16 16"><path d="M6.5 3 Q7.2 8.3 12.5 9 Q7.2 9.7 6.5 15 Q5.8 9.7 0.5 9 Q5.8 8.3 6.5 3 Z" fill="none" stroke="#1a7cf6" stroke-width="1.4" stroke-linejoin="round"/><path d="M12.5 0.5 V5 M10.2 2.8 H14.8" stroke="#1a7cf6" stroke-width="1.3"/></svg>
<div class="t" style="left:216px;top:228.5px;height:24px;line-height:24px;font-size:12.5px;color:#1a7cf6;font-weight:normal;">AI 符號</div>
<div class="a" style="left:56px;top:260px;width:216px;height:1px;background:#ececf0"></div>
<svg style="left:71px;top:276px;" width="10" height="10" viewBox="0 0 10 10"><path d="M1.5 4.5 L5 1.5 L8.5 4.5 M1.5 8.5 L5 5.5 L8.5 8.5" fill="none" stroke="#333" stroke-width="1.2"/></svg>
<div class="t" style="left:84px;top:269.5px;height:24px;line-height:24px;font-size:12px;color:#333;font-weight:normal;">全部折疊</div>
<svg style="left:212px;top:274px;" width="15" height="15" viewBox="0 0 15 15"><path d="M7.5 1.2 L9.4 2.4 L11.7 2.3 L12.4 4.5 L14 6.2 L12.9 8.2 L12.8 10.6 L10.6 11.2 L8.9 13.1 L7.5 13.7 L6.1 13.1 L4.4 11.2 L2.2 10.6 L2.1 8.2 L1 6.2 L2.6 4.5 L3.3 2.3 L5.6 2.4 Z" fill="none" stroke="#444" stroke-width="1.2" stroke-linejoin="round"/><circle cx="7.5" cy="7.5" r="2.3" fill="none" stroke="#444" stroke-width="1.2"/></svg>
<div class="t" style="left:232px;top:269.5px;height:24px;line-height:24px;font-size:12px;color:#333;font-weight:normal;">管理</div>
<div class="a" style="left:56px;top:301px;width:216px;height:1px;background:#ececf0"></div>
<svg style="left:72.5px;top:312.5px;" width="6" height="4" viewBox="0 0 6 4"><path d="M0 0 L6 0 L3 3 Z" fill="#555"/></svg>
<div class="t" style="left:84px;top:302.5px;height:24px;line-height:24px;font-size:12px;color:#333;font-weight:normal;">基本繪圖形狀</div>
<div class="a" style="left:264px;top:346px;width:5px;height:50px;background:#d4d4d8;border-radius:3px"></div>
<div class="a" style="left:56px;top:760px;width:216px;height:1px;background:#ececf0"></div>
<div class="a" style="left:72px;top:773px;width:184px;height:32px;background:#0b7cfd;border-radius:6px"></div>
<div class="t" style="left:104.0px;width:120px;text-align:center;top:777.5px;height:24px;line-height:24px;font-size:12.5px;color:#fff;font-weight:normal;">更多符號</div>
<div class="a" style="left:72px;top:335px;width:40px;height:40px;background:#f4f5f9;border-radius:5px"></div>
<svg style="left:72px;top:335px;" width="40" height="40" viewBox="0 0 40 40"><rect x="4.5" y="4.5" width="31" height="31" fill="none" stroke="#a9a9b0" stroke-width="1"/></svg>
<div class="a" style="left:120px;top:335px;width:40px;height:40px;background:#f4f5f9;border-radius:5px"></div>
<svg style="left:120px;top:335px;" width="40" height="40" viewBox="0 0 40 40"><rect x="2.5" y="10.5" width="35" height="20" fill="none" stroke="#a9a9b0" stroke-width="1"/></svg>
<div class="a" style="left:168px;top:335px;width:40px;height:40px;background:#f4f5f9;border-radius:5px"></div>
<svg style="left:168px;top:335px;" width="40" height="40" viewBox="0 0 40 40"><circle cx="20" cy="20" r="15.5" fill="none" stroke="#a9a9b0" stroke-width="1"/></svg>
<div class="a" style="left:216px;top:335px;width:40px;height:40px;background:#f4f5f9;border-radius:5px"></div>
<svg style="left:216px;top:335px;" width="40" height="40" viewBox="0 0 40 40"><circle cx="20" cy="20" r="15.5" fill="none" stroke="#a9a9b0" stroke-width="1"/></svg>
<div class="a" style="left:72px;top:383px;width:40px;height:40px;background:#f4f5f9;border-radius:5px"></div>
<svg style="left:72px;top:383px;" width="40" height="40" viewBox="0 0 40 40"><rect x="4.5" y="4.5" width="31" height="31" rx="2" fill="none" stroke="#a9a9b0" stroke-width="1"/></svg>
<div class="a" style="left:120px;top:383px;width:40px;height:40px;background:#f4f5f9;border-radius:5px"></div>
<svg style="left:120px;top:383px;" width="40" height="40" viewBox="0 0 40 40"><path d="M3 0.5 L5.5 3 L3 5.5 L0.5 3 Z" fill="#f5d03c" stroke="#c9a420" stroke-width="0.6"/><rect x="2.5" y="10.5" width="35" height="20" rx="5" fill="none" stroke="#a9a9b0" stroke-width="1"/></svg>
<div class="a" style="left:168px;top:383px;width:40px;height:40px;background:#f4f5f9;border-radius:5px"></div>
<svg style="left:168px;top:383px;" width="40" height="40" viewBox="0 0 40 40"><rect x="2.5" y="10.5" width="35" height="20" rx="3" fill="none" stroke="#a9a9b0" stroke-width="1"/></svg>
<div class="a" style="left:216px;top:383px;width:40px;height:40px;background:#f4f5f9;border-radius:5px"></div>
<svg style="left:216px;top:383px;" width="40" height="40" viewBox="0 0 40 40"><path d="M3 0.5 L5.5 3 L3 5.5 L0.5 3 Z" fill="#f5d03c" stroke="#c9a420" stroke-width="0.6"/><path d="M2.5 10.5 H31.5 L37.5 16.5 V30.5 H2.5 Z" fill="none" stroke="#a9a9b0" stroke-width="1"/></svg>
<div class="a" style="left:72px;top:431px;width:40px;height:40px;background:#f4f5f9;border-radius:5px"></div>
<svg style="left:72px;top:431px;" width="40" height="40" viewBox="0 0 40 40"><path d="M3 0.5 L5.5 3 L3 5.5 L0.5 3 Z" fill="#f5d03c" stroke="#c9a420" stroke-width="0.6"/><path d="M2.5 30.5 V17 Q2.5 10.5 9 10.5 H31 Q37.5 10.5 37.5 17 V30.5 Z" fill="none" stroke="#a9a9b0" stroke-width="1"/></svg>
<div class="a" style="left:120px;top:431px;width:40px;height:40px;background:#f4f5f9;border-radius:5px"></div>
<svg style="left:120px;top:431px;" width="40" height="40" viewBox="0 0 40 40"><path d="M3 0.5 L5.5 3 L3 5.5 L0.5 3 Z" fill="#f5d03c" stroke="#c9a420" stroke-width="0.6"/><path d="M2.5 10.5 H37.5 V30.5 H10 Q2.5 30.5 2.5 23 Z" fill="none" stroke="#a9a9b0" stroke-width="1"/></svg>
<div class="a" style="left:168px;top:431px;width:40px;height:40px;background:#f4f5f9;border-radius:5px"></div>
<svg style="left:168px;top:431px;" width="40" height="40" viewBox="0 0 40 40"><path d="M3 0.5 L5.5 3 L3 5.5 L0.5 3 Z" fill="#f5d03c" stroke="#c9a420" stroke-width="0.6"/><rect x="2.5" y="10.5" width="35" height="20" fill="none" stroke="#a9a9b0" stroke-width="1"/><rect x="6.5" y="14.5" width="27" height="12" fill="none" stroke="#a9a9b0" stroke-width="1"/></svg>
<div class="a" style="left:216px;top:431px;width:40px;height:40px;background:#f4f5f9;border-radius:5px"></div>
<svg style="left:216px;top:431px;" width="40" height="40" viewBox="0 0 40 40"><path d="M20 4.5 L36 35.5 H4 Z" fill="none" stroke="#a9a9b0" stroke-width="1"/></svg>
<div class="a" style="left:72px;top:479px;width:40px;height:40px;background:#f4f5f9;border-radius:5px"></div>
<svg style="left:72px;top:479px;" width="40" height="40" viewBox="0 0 40 40"><path d="M28 4.5 L35 35.5 H4 Z" fill="none" stroke="#a9a9b0" stroke-width="1"/></svg>
<div class="a" style="left:120px;top:479px;width:40px;height:40px;background:#f4f5f9;border-radius:5px"></div>
<svg style="left:120px;top:479px;" width="40" height="40" viewBox="0 0 40 40"><path d="M3 0.5 L5.5 3 L3 5.5 L0.5 3 Z" fill="#f5d03c" stroke="#c9a420" stroke-width="0.6"/><path d="M20 4.5 L36 35.5 H4 Z" fill="none" stroke="#a9a9b0" stroke-width="1"/></svg>
<div class="a" style="left:168px;top:479px;width:40px;height:40px;background:#f4f5f9;border-radius:5px"></div>
<svg style="left:168px;top:479px;" width="40" height="40" viewBox="0 0 40 40"><path d="M12 4.5 H28 L35.5 12 V28 L28 35.5 H12 L4.5 28 V12 Z" fill="none" stroke="#a9a9b0" stroke-width="1"/></svg>
<div class="a" style="left:216px;top:479px;width:40px;height:40px;background:#f4f5f9;border-radius:5px"></div>
<svg style="left:216px;top:479px;" width="40" height="40" viewBox="0 0 40 40"><path d="M20 4.5 L36 16 L30 35.5 H10 L4 16 Z" fill="none" stroke="#a9a9b0" stroke-width="1"/></svg>
<div class="a" style="left:72px;top:527px;width:40px;height:40px;background:#f4f5f9;border-radius:5px"></div>
<svg style="left:72px;top:527px;" width="40" height="40" viewBox="0 0 40 40"><path d="M20 4.5 L35.5 20 L20 35.5 L4.5 20 Z" fill="none" stroke="#a9a9b0" stroke-width="1"/></svg>
<div class="a" style="left:120px;top:527px;width:40px;height:40px;background:#f4f5f9;border-radius:5px"></div>
<svg style="left:120px;top:527px;" width="40" height="40" viewBox="0 0 40 40"><ellipse cx="20" cy="20" rx="16" ry="11" fill="none" stroke="#a9a9b0" stroke-width="1"/></svg>
<div class="a" style="left:168px;top:527px;width:40px;height:40px;background:#f4f5f9;border-radius:5px"></div>
<svg style="left:168px;top:527px;" width="40" height="40" viewBox="0 0 40 40"><path d="M3 0.5 L5.5 3 L3 5.5 L0.5 3 Z" fill="#f5d03c" stroke="#c9a420" stroke-width="0.6"/><circle cx="20" cy="20" r="15.5" fill="none" stroke="#a9a9b0" stroke-width="1"/><circle cx="20" cy="20" r="7" fill="none" stroke="#a9a9b0" stroke-width="1"/></svg>
<div class="a" style="left:216px;top:527px;width:40px;height:40px;background:#f4f5f9;border-radius:5px"></div>
<svg style="left:216px;top:527px;" width="40" height="40" viewBox="0 0 40 40"><path d="M3 0.5 L5.5 3 L3 5.5 L0.5 3 Z" fill="#f5d03c" stroke="#c9a420" stroke-width="0.6"/><circle cx="20" cy="20" r="15.5" fill="none" stroke="#a9a9b0" stroke-width="1"/><circle cx="20" cy="20" r="12.5" fill="none" stroke="#a9a9b0" stroke-width="1"/></svg>
<div class="a" style="left:72px;top:575px;width:40px;height:40px;background:#f4f5f9;border-radius:5px"></div>
<svg style="left:72px;top:575px;" width="40" height="40" viewBox="0 0 40 40"><path d="M3 0.5 L5.5 3 L3 5.5 L0.5 3 Z" fill="#f5d03c" stroke="#c9a420" stroke-width="0.6"/><path d="M10 10.5 H37.5 L30 30.5 H2.5 Z" fill="none" stroke="#a9a9b0" stroke-width="1"/></svg>
<div class="a" style="left:120px;top:575px;width:40px;height:40px;background:#f4f5f9;border-radius:5px"></div>
<svg style="left:120px;top:575px;" width="40" height="40" viewBox="0 0 40 40"><path d="M3 0.5 L5.5 3 L3 5.5 L0.5 3 Z" fill="#f5d03c" stroke="#c9a420" stroke-width="0.6"/><path d="M11 10.5 H29 L36 30.5 H4 Z" fill="none" stroke="#a9a9b0" stroke-width="1"/></svg>
<div class="a" style="left:168px;top:575px;width:40px;height:40px;background:#f4f5f9;border-radius:5px"></div>
<svg style="left:168px;top:575px;" width="40" height="40" viewBox="0 0 40 40"><path d="M20 4.5 L36 35.5 H4 Z" fill="none" stroke="#a9a9b0" stroke-width="1" stroke-linejoin="round"/></svg>
<div class="a" style="left:216px;top:575px;width:40px;height:40px;background:#f4f5f9;border-radius:5px"></div>
<svg style="left:216px;top:575px;" width="40" height="40" viewBox="0 0 40 40"><path d="M4.5 4.5 L35.5 35.5 H4.5 Z" fill="none" stroke="#a9a9b0" stroke-width="1"/></svg>
<div class="a" style="left:72px;top:623px;width:40px;height:40px;background:#f4f5f9;border-radius:5px"></div>
<svg style="left:72px;top:623px;" width="40" height="40" viewBox="0 0 40 40"><rect x="2.5" y="12.5" width="35" height="16" rx="8" fill="none" stroke="#a9a9b0" stroke-width="1"/></svg>
<div class="a" style="left:120px;top:623px;width:40px;height:40px;background:#f4f5f9;border-radius:5px"></div>
<svg style="left:120px;top:623px;" width="40" height="40" viewBox="0 0 40 40"><path d="M20 10.5 L37.5 20.5 L20 30.5 L2.5 20.5 Z" fill="none" stroke="#a9a9b0" stroke-width="1"/></svg>
<div class="a" style="left:168px;top:623px;width:40px;height:40px;background:#f4f5f9;border-radius:5px"></div>
<svg style="left:168px;top:623px;" width="40" height="40" viewBox="0 0 40 40"><path d="M20 5 L35 15.5 L30 34.5 H10 L5 15.5 Z" fill="none" stroke="#a9a9b0" stroke-width="1" stroke-linejoin="round"/></svg>
<div class="a" style="left:216px;top:623px;width:40px;height:40px;background:#f4f5f9;border-radius:5px"></div>
<svg style="left:216px;top:623px;" width="40" height="40" viewBox="0 0 40 40"><path d="M12 5.5 H28 L36 20 L28 34.5 H12 L4 20 Z" fill="none" stroke="#a9a9b0" stroke-width="1"/></svg>
<div class="a" style="left:72px;top:671px;width:40px;height:40px;background:#f4f5f9;border-radius:5px"></div>
<svg style="left:72px;top:671px;" width="40" height="40" viewBox="0 0 40 40"><path d="M20 4.5 L33 10.5 L36 24 L28 34.5 H12 L4 24 L7 10.5 Z" fill="none" stroke="#a9a9b0" stroke-width="1"/></svg>
<div class="a" style="left:120px;top:671px;width:40px;height:40px;background:#f4f5f9;border-radius:5px"></div>
<svg style="left:120px;top:671px;" width="40" height="40" viewBox="0 0 40 40"><path d="M13.5 4.5 H26.5 L35.5 13.5 V26.5 L26.5 35.5 H13.5 L4.5 26.5 V13.5 Z" fill="none" stroke="#a9a9b0" stroke-width="1"/></svg>
<div class="a" style="left:168px;top:671px;width:40px;height:40px;background:#f4f5f9;border-radius:5px"></div>
<svg style="left:168px;top:671px;" width="40" height="40" viewBox="0 0 40 40"><path d="M3 0.5 L5.5 3 L3 5.5 L0.5 3 Z" fill="#f5d03c" stroke="#c9a420" stroke-width="0.6"/><path d="M20 5 L23.5 10 L29.5 8.5 L29 14.5 L35 17.5 L30 21.5 L33 27 L27 27.5 L25 33.5 L20 30 L15 33.5 L13 27.5 L7 27 L10 21.5 L5 17.5 L11 14.5 L10.5 8.5 L16.5 10 Z" fill="none" stroke="#a9a9b0" stroke-width="1"/></svg>
<div class="a" style="left:216px;top:671px;width:40px;height:40px;background:#f4f5f9;border-radius:5px"></div>
<svg style="left:216px;top:671px;" width="40" height="40" viewBox="0 0 40 40"><path d="M20 34 Q4 23 4 14 A8 8 0 0 1 20 11 A8 8 0 0 1 36 14 Q36 23 20 34 Z" fill="none" stroke="#a9a9b0" stroke-width="1"/></svg>
<div class="a" style="left:72px;top:719px;width:40px;height:40px;background:#f4f5f9;border-radius:5px"></div>
<svg style="left:72px;top:719px;" width="40" height="40" viewBox="0 0 40 40"><rect x="3.5" y="3.5" width="33" height="33" fill="none" stroke="#a9a9b0" stroke-width="1" stroke="#999"/><rect x="5.5" y="5.5" width="29" height="29" fill="none" stroke="#a9a9b0" stroke-width="1"/></svg>
<div class="a" style="left:120px;top:719px;width:40px;height:40px;background:#f4f5f9;border-radius:5px"></div>
<svg style="left:120px;top:719px;" width="40" height="40" viewBox="0 0 40 40"><path d="M3 0.5 L5.5 3 L3 5.5 L0.5 3 Z" fill="#f5d03c" stroke="#c9a420" stroke-width="0.6"/><path d="M2.5 17 L37.5 10.5 V30.5 H2.5 Z" fill="none" stroke="#a9a9b0" stroke-width="1"/></svg>
<div class="a" style="left:168px;top:719px;width:40px;height:40px;background:#f4f5f9;border-radius:5px"></div>
<svg style="left:168px;top:719px;" width="40" height="40" viewBox="0 0 40 40"><path d="M3 0.5 L5.5 3 L3 5.5 L0.5 3 Z" fill="#f5d03c" stroke="#c9a420" stroke-width="0.6"/><path d="M8 10.5 H37.5 V30.5 H2.5 V16 Z" fill="none" stroke="#a9a9b0" stroke-width="1"/></svg>
<div class="a" style="left:216px;top:719px;width:40px;height:40px;background:#f4f5f9;border-radius:5px"></div>
<svg style="left:216px;top:719px;" width="40" height="40" viewBox="0 0 40 40"><path d="M3 0.5 L5.5 3 L3 5.5 L0.5 3 Z" fill="#f5d03c" stroke="#c9a420" stroke-width="0.6"/><path d="M7 10.5 H33 L37.5 15 V26 L33 30.5 H7 L2.5 26 V15 Z" fill="none" stroke="#a9a9b0" stroke-width="1"/></svg>
<div class="a" style="left:273px;top:168px;width:1108px;height:18px;background:#fff"></div>
<div class="a" style="left:273px;top:186px;width:17px;height:600px;background:#fbfbfd"></div>
<div class="a" style="left:273px;top:168px;width:1108px;height:18px;overflow:hidden"><svg style="left:0;top:0" width="1108" height="18"><rect x="28" y="0" width="1" height="17" fill="#e4e4e8"/><text x="29.7" y="12" font-size="11" fill="#777" font-family="Liberation Sans">-40</text><rect x="58" y="0" width="1" height="17" fill="#e4e4e8"/><text x="60.3" y="12" font-size="11" fill="#777" font-family="Liberation Sans">-30</text><rect x="89" y="0" width="1" height="17" fill="#e4e4e8"/><text x="90.9" y="12" font-size="11" fill="#777" font-family="Liberation Sans">-20</text><rect x="119" y="0" width="1" height="17" fill="#e4e4e8"/><text x="121.5" y="12" font-size="11" fill="#777" font-family="Liberation Sans">-10</text><rect x="150" y="0" width="1" height="17" fill="#e4e4e8"/><text x="152.1" y="12" font-size="11" fill="#777" font-family="Liberation Sans">0</text><rect x="181" y="0" width="1" height="17" fill="#e4e4e8"/><text x="182.7" y="12" font-size="11" fill="#777" font-family="Liberation Sans">10</text><rect x="211" y="0" width="1" height="17" fill="#e4e4e8"/><text x="213.3" y="12" font-size="11" fill="#777" font-family="Liberation Sans">20</text><rect x="242" y="0" width="1" height="17" fill="#e4e4e8"/><text x="243.9" y="12" font-size="11" fill="#777" font-family="Liberation Sans">30</text><rect x="273" y="0" width="1" height="17" fill="#e4e4e8"/><text x="274.5" y="12" font-size="11" fill="#777" font-family="Liberation Sans">40</text><rect x="303" y="0" width="1" height="17" fill="#e4e4e8"/><text x="305.2" y="12" font-size="11" fill="#777" font-family="Liberation Sans">50</text><rect x="334" y="0" width="1" height="17" fill="#e4e4e8"/><text x="335.8" y="12" font-size="11" fill="#777" font-family="Liberation Sans">60</text><rect x="364" y="0" width="1" height="17" fill="#e4e4e8"/><text x="366.4" y="12" font-size="11" fill="#777" font-family="Liberation Sans">70</text><rect x="395" y="0" width="1" height="17" fill="#e4e4e8"/><text x="397.0" y="12" font-size="11" fill="#777" font-family="Liberation Sans">80</text><rect x="426" y="0" width="1" height="17" fill="#e4e4e8"/><text x="427.6" y="12" font-size="11" fill="#777" font-family="Liberation Sans">90</text><rect x="456" y="0" width="1" height="17" fill="#e4e4e8"/><text x="458.2" y="12" font-size="11" fill="#777" font-family="Liberation Sans">100</text><rect x="487" y="0" width="1" height="17" fill="#e4e4e8"/><text x="488.8" y="12" font-size="11" fill="#777" font-family="Liberation Sans">110</text><rect x="517" y="0" width="1" height="17" fill="#e4e4e8"/><text x="519.4" y="12" font-size="11" fill="#777" font-family="Liberation Sans">120</text><rect x="548" y="0" width="1" height="17" fill="#e4e4e8"/><text x="550.0" y="12" font-size="11" fill="#777" font-family="Liberation Sans">130</text><rect x="579" y="0" width="1" height="17" fill="#e4e4e8"/><text x="580.6" y="12" font-size="11" fill="#777" font-family="Liberation Sans">140</text><rect x="609" y="0" width="1" height="17" fill="#e4e4e8"/><text x="611.2" y="12" font-size="11" fill="#777" font-family="Liberation Sans">150</text><rect x="640" y="0" width="1" height="17" fill="#e4e4e8"/><text x="641.9" y="12" font-size="11" fill="#777" font-family="Liberation Sans">160</text><rect x="670" y="0" width="1" height="17" fill="#e4e4e8"/><text x="672.5" y="12" font-size="11" fill="#777" font-family="Liberation Sans">170</text><rect x="701" y="0" width="1" height="17" fill="#e4e4e8"/><text x="703.1" y="12" font-size="11" fill="#777" font-family="Liberation Sans">180</text><rect x="732" y="0" width="1" height="17" fill="#e4e4e8"/><text x="733.7" y="12" font-size="11" fill="#777" font-family="Liberation Sans">190</text><rect x="762" y="0" width="1" height="17" fill="#e4e4e8"/><text x="764.3" y="12" font-size="11" fill="#777" font-family="Liberation Sans">200</text><rect x="793" y="0" width="1" height="17" fill="#e4e4e8"/><text x="794.9" y="12" font-size="11" fill="#777" font-family="Liberation Sans">210</text><rect x="824" y="0" width="1" height="17" fill="#e4e4e8"/><text x="825.5" y="12" font-size="11" fill="#777" font-family="Liberation Sans">220</text><rect x="854" y="0" width="1" height="17" fill="#e4e4e8"/><text x="856.1" y="12" font-size="11" fill="#777" font-family="Liberation Sans">230</text><rect x="885" y="0" width="1" height="17" fill="#e4e4e8"/><text x="886.7" y="12" font-size="11" fill="#777" font-family="Liberation Sans">240</text><rect x="915" y="0" width="1" height="17" fill="#e4e4e8"/><text x="917.3" y="12" font-size="11" fill="#777" font-family="Liberation Sans">250</text><rect x="946" y="0" width="1" height="17" fill="#e4e4e8"/><text x="948.0" y="12" font-size="11" fill="#777" font-family="Liberation Sans">260</text><rect x="977" y="0" width="1" height="17" fill="#e4e4e8"/><text x="978.6" y="12" font-size="11" fill="#777" font-family="Liberation Sans">270</text><rect x="1007" y="0" width="1" height="17" fill="#e4e4e8"/><text x="1009.2" y="12" font-size="11" fill="#777" font-family="Liberation Sans">280</text><rect x="1038" y="0" width="1" height="17" fill="#e4e4e8"/><text x="1039.8" y="12" font-size="11" fill="#777" font-family="Liberation Sans">290</text><rect x="1068" y="0" width="1" height="17" fill="#e4e4e8"/><text x="1070.4" y="12" font-size="11" fill="#777" font-family="Liberation Sans">300</text><rect x="1099" y="0" width="1" height="17" fill="#e4e4e8"/><text x="1101.0" y="12" font-size="11" fill="#777" font-family="Liberation Sans">310</text><rect x="17" y="0" width="1" height="17" fill="#e4e4e8"/><rect x="0" y="17" width="1108" height="1" fill="#e4e4e8"/></svg></div>
<div class="a" style="left:273px;top:186px;width:17px;height:600px;overflow:hidden"><svg style="left:0;top:0" width="17" height="600"><rect x="0" y="18" width="17" height="1" fill="#e4e4e8"/><text transform="translate(11.3 20.9) rotate(-90)" text-anchor="end" font-size="11" fill="#777" font-family="Liberation Sans">10</text><rect x="0" y="49" width="17" height="1" fill="#e4e4e8"/><text transform="translate(11.3 51.5) rotate(-90)" text-anchor="end" font-size="11" fill="#777" font-family="Liberation Sans">20</text><rect x="0" y="79" width="17" height="1" fill="#e4e4e8"/><text transform="translate(11.3 82.1) rotate(-90)" text-anchor="end" font-size="11" fill="#777" font-family="Liberation Sans">30</text><rect x="0" y="110" width="17" height="1" fill="#e4e4e8"/><text transform="translate(11.3 112.7) rotate(-90)" text-anchor="end" font-size="11" fill="#777" font-family="Liberation Sans">40</text><rect x="0" y="140" width="17" height="1" fill="#e4e4e8"/><text transform="translate(11.3 143.4) rotate(-90)" text-anchor="end" font-size="11" fill="#777" font-family="Liberation Sans">50</text><rect x="0" y="171" width="17" height="1" fill="#e4e4e8"/><text transform="translate(11.3 174.0) rotate(-90)" text-anchor="end" font-size="11" fill="#777" font-family="Liberation Sans">60</text><rect x="0" y="202" width="17" height="1" fill="#e4e4e8"/><text transform="translate(11.3 204.6) rotate(-90)" text-anchor="end" font-size="11" fill="#777" font-family="Liberation Sans">70</text><rect x="0" y="232" width="17" height="1" fill="#e4e4e8"/><text transform="translate(11.3 235.2) rotate(-90)" text-anchor="end" font-size="11" fill="#777" font-family="Liberation Sans">80</text><rect x="0" y="263" width="17" height="1" fill="#e4e4e8"/><text transform="translate(11.3 265.8) rotate(-90)" text-anchor="end" font-size="11" fill="#777" font-family="Liberation Sans">90</text><rect x="0" y="293" width="17" height="1" fill="#e4e4e8"/><text transform="translate(11.3 296.4) rotate(-90)" text-anchor="end" font-size="11" fill="#777" font-family="Liberation Sans">100</text><rect x="0" y="324" width="17" height="1" fill="#e4e4e8"/><text transform="translate(11.3 327.0) rotate(-90)" text-anchor="end" font-size="11" fill="#777" font-family="Liberation Sans">110</text><rect x="0" y="355" width="17" height="1" fill="#e4e4e8"/><text transform="translate(11.3 357.6) rotate(-90)" text-anchor="end" font-size="11" fill="#777" font-family="Liberation Sans">120</text><rect x="0" y="385" width="17" height="1" fill="#e4e4e8"/><text transform="translate(11.3 388.2) rotate(-90)" text-anchor="end" font-size="11" fill="#777" font-family="Liberation Sans">130</text><rect x="0" y="416" width="17" height="1" fill="#e4e4e8"/><text transform="translate(11.3 418.8) rotate(-90)" text-anchor="end" font-size="11" fill="#777" font-family="Liberation Sans">140</text><rect x="0" y="446" width="17" height="1" fill="#e4e4e8"/><text transform="translate(11.3 449.5) rotate(-90)" text-anchor="end" font-size="11" fill="#777" font-family="Liberation Sans">150</text><rect x="0" y="477" width="17" height="1" fill="#e4e4e8"/><text transform="translate(11.3 480.1) rotate(-90)" text-anchor="end" font-size="11" fill="#777" font-family="Liberation Sans">160</text><rect x="0" y="508" width="17" height="1" fill="#e4e4e8"/><text transform="translate(11.3 510.7) rotate(-90)" text-anchor="end" font-size="11" fill="#777" font-family="Liberation Sans">170</text><rect x="0" y="538" width="17" height="1" fill="#e4e4e8"/><text transform="translate(11.3 541.3) rotate(-90)" text-anchor="end" font-size="11" fill="#777" font-family="Liberation Sans">180</text><rect x="0" y="569" width="17" height="1" fill="#e4e4e8"/><text transform="translate(11.3 571.9) rotate(-90)" text-anchor="end" font-size="11" fill="#777" font-family="Liberation Sans">190</text><rect x="0" y="600" width="17" height="1" fill="#e4e4e8"/><text transform="translate(11.3 602.5) rotate(-90)" text-anchor="end" font-size="11" fill="#777" font-family="Liberation Sans">200</text><rect x="16.5" y="0" width="1" height="600" fill="#e4e4e8"/><rect x="0" y="0" width="1" height="600" fill="#e4e4e8"/></svg></div>
<div class="a" style="left:290px;top:186px;width:1091px;height:600px;background:#e9e9ef"></div>
<div class="a" style="left:423px;top:186px;width:880px;height:582px;background:#fff;border:1px solid #d3d3d8;border-top:none"></div>
<svg style="left:0;top:0" width="1672" height="850" shape-rendering="crispEdges"><rect x="469" y="204" width="1" height="534" fill="#efeff1"/><rect x="499" y="204" width="1" height="534" fill="#efeff1"/><rect x="530" y="204" width="1" height="534" fill="#efeff1"/><rect x="561" y="204" width="1" height="534" fill="#efeff1"/><rect x="591" y="204" width="1" height="534" fill="#efeff1"/><rect x="622" y="204" width="1" height="534" fill="#efeff1"/><rect x="652" y="204" width="1" height="534" fill="#efeff1"/><rect x="683" y="204" width="1" height="534" fill="#efeff1"/><rect x="714" y="204" width="1" height="534" fill="#efeff1"/><rect x="744" y="204" width="1" height="534" fill="#efeff1"/><rect x="775" y="204" width="1" height="534" fill="#efeff1"/><rect x="806" y="204" width="1" height="534" fill="#efeff1"/><rect x="836" y="204" width="1" height="534" fill="#efeff1"/><rect x="867" y="204" width="1" height="534" fill="#efeff1"/><rect x="897" y="204" width="1" height="534" fill="#efeff1"/><rect x="928" y="204" width="1" height="534" fill="#efeff1"/><rect x="959" y="204" width="1" height="534" fill="#efeff1"/><rect x="989" y="204" width="1" height="534" fill="#efeff1"/><rect x="1020" y="204" width="1" height="534" fill="#efeff1"/><rect x="1050" y="204" width="1" height="534" fill="#efeff1"/><rect x="1081" y="204" width="1" height="534" fill="#efeff1"/><rect x="1112" y="204" width="1" height="534" fill="#efeff1"/><rect x="1142" y="204" width="1" height="534" fill="#efeff1"/><rect x="1173" y="204" width="1" height="534" fill="#efeff1"/><rect x="1203" y="204" width="1" height="534" fill="#efeff1"/><rect x="1234" y="204" width="1" height="534" fill="#efeff1"/><rect x="1265" y="204" width="1" height="534" fill="#efeff1"/><rect x="454" y="219" width="819" height="1" fill="#efeff1"/><rect x="454" y="249" width="819" height="1" fill="#efeff1"/><rect x="454" y="280" width="819" height="1" fill="#efeff1"/><rect x="454" y="311" width="819" height="1" fill="#efeff1"/><rect x="454" y="341" width="819" height="1" fill="#efeff1"/><rect x="454" y="372" width="819" height="1" fill="#efeff1"/><rect x="454" y="402" width="819" height="1" fill="#efeff1"/><rect x="454" y="433" width="819" height="1" fill="#efeff1"/><rect x="454" y="464" width="819" height="1" fill="#efeff1"/><rect x="454" y="494" width="819" height="1" fill="#efeff1"/><rect x="454" y="525" width="819" height="1" fill="#efeff1"/><rect x="454" y="556" width="819" height="1" fill="#efeff1"/><rect x="454" y="586" width="819" height="1" fill="#efeff1"/><rect x="454" y="617" width="819" height="1" fill="#efeff1"/><rect x="454" y="647" width="819" height="1" fill="#efeff1"/><rect x="454" y="678" width="819" height="1" fill="#efeff1"/><rect x="454" y="709" width="819" height="1" fill="#efeff1"/><rect x="454" y="204" width="1" height="534" fill="#dcdcdf"/><rect x="484" y="204" width="1" height="534" fill="#dcdcdf"/><rect x="515" y="204" width="1" height="534" fill="#dcdcdf"/><rect x="545" y="204" width="1" height="534" fill="#dcdcdf"/><rect x="576" y="204" width="1" height="534" fill="#dcdcdf"/><rect x="607" y="204" width="1" height="534" fill="#dcdcdf"/><rect x="637" y="204" width="1" height="534" fill="#dcdcdf"/><rect x="668" y="204" width="1" height="534" fill="#dcdcdf"/><rect x="698" y="204" width="1" height="534" fill="#dcdcdf"/><rect x="729" y="204" width="1" height="534" fill="#dcdcdf"/><rect x="760" y="204" width="1" height="534" fill="#dcdcdf"/><rect x="790" y="204" width="1" height="534" fill="#dcdcdf"/><rect x="821" y="204" width="1" height="534" fill="#dcdcdf"/><rect x="851" y="204" width="1" height="534" fill="#dcdcdf"/><rect x="882" y="204" width="1" height="534" fill="#dcdcdf"/><rect x="913" y="204" width="1" height="534" fill="#dcdcdf"/><rect x="943" y="204" width="1" height="534" fill="#dcdcdf"/><rect x="974" y="204" width="1" height="534" fill="#dcdcdf"/><rect x="1004" y="204" width="1" height="534" fill="#dcdcdf"/><rect x="1035" y="204" width="1" height="534" fill="#dcdcdf"/><rect x="1066" y="204" width="1" height="534" fill="#dcdcdf"/><rect x="1096" y="204" width="1" height="534" fill="#dcdcdf"/><rect x="1127" y="204" width="1" height="534" fill="#dcdcdf"/><rect x="1158" y="204" width="1" height="534" fill="#dcdcdf"/><rect x="1188" y="204" width="1" height="534" fill="#dcdcdf"/><rect x="1219" y="204" width="1" height="534" fill="#dcdcdf"/><rect x="1249" y="204" width="1" height="534" fill="#dcdcdf"/><rect x="454" y="204" width="819" height="1" fill="#dcdcdf"/><rect x="454" y="234" width="819" height="1" fill="#dcdcdf"/><rect x="454" y="265" width="819" height="1" fill="#dcdcdf"/><rect x="454" y="295" width="819" height="1" fill="#dcdcdf"/><rect x="454" y="326" width="819" height="1" fill="#dcdcdf"/><rect x="454" y="357" width="819" height="1" fill="#dcdcdf"/><rect x="454" y="387" width="819" height="1" fill="#dcdcdf"/><rect x="454" y="418" width="819" height="1" fill="#dcdcdf"/><rect x="454" y="448" width="819" height="1" fill="#dcdcdf"/><rect x="454" y="479" width="819" height="1" fill="#dcdcdf"/><rect x="454" y="510" width="819" height="1" fill="#dcdcdf"/><rect x="454" y="540" width="819" height="1" fill="#dcdcdf"/><rect x="454" y="571" width="819" height="1" fill="#dcdcdf"/><rect x="454" y="601" width="819" height="1" fill="#dcdcdf"/><rect x="454" y="632" width="819" height="1" fill="#dcdcdf"/><rect x="454" y="663" width="819" height="1" fill="#dcdcdf"/><rect x="454" y="693" width="819" height="1" fill="#dcdcdf"/><rect x="454" y="724" width="819" height="1" fill="#dcdcdf"/><rect x="1272" y="204" width="1" height="534" fill="#dcdcdf"/><rect x="454" y="737" width="819" height="1" fill="#dcdcdf"/></svg>
<svg style="left:0;top:0" width="1672" height="850"><rect x="617.5" y="437.5" width="112" height="85" fill="#fff" stroke="#7dc143" stroke-width="1.3" stroke-dasharray="4 3"/><rect x="810.5" y="572.5" width="113" height="43" fill="#fff" stroke="#7dc143" stroke-width="1.3" stroke-dasharray="4 3"/><rect x="624.5" y="635.5" width="186" height="72" fill="#fff" stroke="#7dc143" stroke-width="1.3" stroke-dasharray="4 3"/><rect x="1159.5" y="311.5" width="136" height="79" fill="#fff" stroke="#7dc143" stroke-width="1.3" stroke-dasharray="4 3"/><rect x="996.5" y="418.5" width="112" height="94" fill="#fff" stroke="#7dc143" stroke-width="1.3" stroke-dasharray="4 3"/><rect x="996.5" y="635.5" width="261" height="72" fill="#fff" stroke="#7dc143" stroke-width="1.3" stroke-dasharray="4 3"/><rect x="454.5" y="291.5" width="150" height="100" fill="#fff" stroke="#3a86e8" stroke-width="1.2" stroke-dasharray="3.5 2.5"/><path d="M463.5 392 V418.5 H590" fill="none" stroke="#111" stroke-width="1.2"/><path d="M586 415 L594 418.5 L586 422 Z" fill="#111"/><path d="M663 410.5 H672" stroke="#111" stroke-width="1.2"/><path d="M664 407.5 L657.5 410.5 L664 413.5 Z" fill="#111"/><path d="M672.5 522.5 C690 565 720 585 776 590" fill="none" stroke="#7dc143" stroke-width="1.2"/><path d="M765 585.5 L778 590.3 L765 593.5 L769 590 Z" fill="#7dc143" stroke="#7dc143" stroke-width="0.8" stroke-linejoin="round"/></svg>
<div class="a" style="left:519px;top:334px;width:21px;height:13px;background:#0b6fd6"></div>
<div class="t" style="left:514.5px;width:30px;text-align:center;top:328.5px;height:24px;line-height:24px;font-size:10.5px;color:#fff;font-weight:normal;">父親</div>
<div class="a" style="left:540px;top:334px;width:1px;height:13px;background:#000"></div>
<div class="t" style="left:846.0px;width:40px;text-align:center;top:582.0px;height:24px;line-height:24px;font-size:9px;color:#111;font-weight:bold;-webkit-text-stroke:0;">Me</div>
<svg style="left:0;top:0" width="1672" height="850">
<path d="M835 452 L861 452 L867 521 L830 521 Z" fill="#a9772b"/>
<path d="M835 452 L861 452 L863.5 487 Q846 480 836 462 Z" fill="#8e6426"/>
<g fill="#4aa346">
<circle cx="787" cy="402" r="35"/>
<circle cx="816" cy="432" r="36"/>
<circle cx="868" cy="437" r="36"/>
<circle cx="908" cy="411" r="36"/>
</g>
<g fill="#55b64b">
<circle cx="853" cy="341" r="30"/>
<circle cx="812" cy="367" r="32"/>
<circle cx="890" cy="347" r="23"/>
<circle cx="896" cy="371" r="31"/>
<circle cx="785" cy="396" r="34"/>
<circle cx="907" cy="404" r="35"/>
<circle cx="816" cy="424" r="35"/>
<circle cx="868" cy="428" r="35"/>
<circle cx="850" cy="395" r="45"/>
</g>
<ellipse cx="812.3" cy="402.8" rx="8.2" ry="9.2" fill="#1f7439"/>
<ellipse cx="882.9" cy="402.8" rx="8.2" ry="9.2" fill="#1f7439"/>
<path d="M826 404 Q847.5 401 869.5 404 L869.5 414 Q869.5 435 847.7 435 Q826 435 826 414 Z" fill="#1f7439"/>
<clipPath id="mc"><path d="M826 404 Q847.5 401 869.5 404 L869.5 414 Q869.5 435 847.7 435 Q826 435 826 414 Z"/></clipPath>
<ellipse cx="847.7" cy="428.5" rx="11.5" ry="6" fill="#f6b995" clip-path="url(#mc)"/>
</svg>
<svg style="left:0;top:0" width="1672" height="850"><text transform="translate(777.50 319.91) rotate(-44.76) scale(0.84 1)" text-anchor="middle" font-family="Liberation Sans" font-size="31" fill="#111" stroke="#111" stroke-width="1.1">M</text><text transform="translate(794.60 306.37) rotate(-31.98) scale(0.72 1)" text-anchor="middle" font-family="Liberation Sans" font-size="31" fill="#111" stroke="#111" stroke-width="1.1">y</text><text transform="translate(812.30 297.66) rotate(-20.42) scale(0.72 1)" text-anchor="middle" font-family="Liberation Sans" font-size="31" fill="#111" stroke="#111" stroke-width="1.1">F</text><text transform="translate(826.00 293.67) rotate(-12.07) scale(0.72 1)" text-anchor="middle" font-family="Liberation Sans" font-size="31" fill="#111" stroke="#111" stroke-width="1.1">a</text><text transform="translate(840.80 291.67) rotate(-3.33) scale(0.74 1)" text-anchor="middle" font-family="Liberation Sans" font-size="31" fill="#111" stroke="#111" stroke-width="1.1">m</text><text transform="translate(856.30 291.99) rotate(5.74) scale(0.8 1)" text-anchor="middle" font-family="Liberation Sans" font-size="31" fill="#111" stroke="#111" stroke-width="1.1">i</text><text transform="translate(863.80 293.04) rotate(10.17) scale(0.8 1)" text-anchor="middle" font-family="Liberation Sans" font-size="31" fill="#111" stroke="#111" stroke-width="1.1">l</text><text transform="translate(873.60 295.32) rotate(16.05) scale(0.72 1)" text-anchor="middle" font-family="Liberation Sans" font-size="31" fill="#111" stroke="#111" stroke-width="1.1">y</text><text transform="translate(896.50 305.21) rotate(30.68) scale(0.72 1)" text-anchor="middle" font-family="Liberation Sans" font-size="31" fill="#111" stroke="#111" stroke-width="1.1">T</text><text transform="translate(907.00 312.40) rotate(38.12) scale(0.72 1)" text-anchor="middle" font-family="Liberation Sans" font-size="31" fill="#111" stroke="#111" stroke-width="1.1">r</text><text transform="translate(917.00 321.43) rotate(46.00) scale(0.72 1)" text-anchor="middle" font-family="Liberation Sans" font-size="31" fill="#111" stroke="#111" stroke-width="1.1">e</text><text transform="translate(924.80 330.57) rotate(53.03) scale(0.72 1)" text-anchor="middle" font-family="Liberation Sans" font-size="31" fill="#111" stroke="#111" stroke-width="1.1">e</text></svg>
<div class="a" style="left:324px;top:220px;width:419px;height:66px;background:#fff;border-radius:10px;box-shadow:0 1px 8px rgba(0,0,0,0.13)"></div>
<svg style="left:337px;top:232px" width="22" height="22" viewBox="0 0 22 22"><defs><linearGradient id="aig" x1="0" y1="1" x2="1" y2="0"><stop offset="0" stop-color="#7a3cf0"/><stop offset="1" stop-color="#3a6ff8"/></linearGradient></defs><path d="M9 5 Q10 11.5 16.5 12.5 Q10 13.5 9 20 Q8 13.5 1.5 12.5 Q8 11.5 9 5 Z" fill="url(#aig)"/><path d="M17 1 Q17.4 3.6 20 4 Q17.4 4.4 17 7 Q16.6 4.4 14 4 Q16.6 3.6 17 1 Z" fill="#3a6ff8"/></svg>
<div class="t" style="left:332.0px;width:30px;text-align:center;top:259.0px;height:24px;line-height:24px;font-size:11.5px;color:#333;font-weight:normal;-webkit-text-stroke:0;">AI</div>
<div class="a" style="left:372px;top:228px;width:1px;height:50px;background:#ececf0"></div>
<div class="a" style="left:383px;top:227px;width:89px;height:23px;background:#fff;border:1px solid #e4e4e9;border-radius:5px"></div>
<svg style="left:389px;top:231px;" width="15" height="15" viewBox="0 0 15 15"><circle cx="6.5" cy="6.5" r="5.3" fill="none" stroke="#bbb" stroke-width="1.3"/><path d="M10.5 10.5 L13.5 13.5" stroke="#bbb" stroke-width="1.4"/></svg>
<div class="t" style="left:409px;top:227.0px;height:24px;line-height:24px;font-size:13px;color:#222;font-weight:normal;-webkit-text-stroke:0;">Calibri</div>
<svg style="left:460.5px;top:237.0px;" width="6" height="4" viewBox="0 0 6 4"><path d="M0 0 L6 0 L3 3 Z" fill="#666"/></svg>
<div class="a" style="left:479px;top:227px;width:47px;height:23px;background:#fff;border:1px solid #e4e4e9;border-radius:5px"></div>
<div class="t" style="left:487px;top:227.0px;height:24px;line-height:24px;font-size:13px;color:#222;font-weight:normal;-webkit-text-stroke:0;">9</div>
<svg style="left:515px;top:237.0px;" width="6" height="4" viewBox="0 0 6 4"><path d="M0 0 L6 0 L3 3 Z" fill="#666"/></svg>
<svg style="left:537px;top:231px;" width="17" height="15" viewBox="0 0 17 15"><path d="M1 14 L6.5 1.5 L12 14 M3 9.5 H10" fill="none" stroke="#333" stroke-width="1.6"/><path d="M13.5 1 V6.5 M10.8 3.8 H16.2" stroke="#333" stroke-width="1.5"/></svg>
<svg style="left:566px;top:231px;" width="17" height="15" viewBox="0 0 17 15"><path d="M1 14 L6.5 1.5 L12 14 M3 9.5 H10" fill="none" stroke="#333" stroke-width="1.6"/><path d="M11 3.5 H16.5" stroke="#333" stroke-width="1.5"/></svg>
<svg style="left:595px;top:233px;" width="19" height="12" viewBox="0 0 19 12"><path d="M2 1 H16 M0.5 5.5 H18 M2 10 H16" stroke="#333" stroke-width="1.5"/></svg>
<div class="t" style="left:388px;top:254.5px;height:24px;line-height:24px;font-size:16px;color:#333;font-weight:bold;-webkit-text-stroke:0;">B</div>
<div class="t" style="left:418px;top:255.0px;height:24px;line-height:24px;font-size:16px;color:#333;font-weight:bold;-webkit-text-stroke:0;font-family:'Liberation Serif'"><i>I</i></div>
<svg style="left:448px;top:258px;" width="12" height="16" viewBox="0 0 12 16"><path d="M1.5 1 V7.5 A4.5 4.5 0 0 0 10.5 7.5 V1 M0.5 14.5 H11.5" fill="none" stroke="#333" stroke-width="1.5"/></svg>
<svg style="left:477px;top:258px;" width="15" height="16" viewBox="0 0 15 16"><path d="M11 3.5 A3.8 2.8 0 0 0 4 4 C4 6 6 7 7.5 7.5 M4.3 11.5 A3.8 2.8 0 0 0 11.3 11 C11.3 9.5 10.3 8.8 9 8.3" fill="none" stroke="#333" stroke-width="1.5"/><path d="M0.5 7.8 H14.5" stroke="#333" stroke-width="1.4"/></svg>
<svg style="left:504px;top:258px;" width="21" height="16" viewBox="0 0 21 16"><path d="M3 1 V15 M1 3.5 L3 1 L5 3.5 M1 12.5 L3 15 L5 12.5" fill="none" stroke="#333" stroke-width="1.3"/><path d="M8 3 H19 M8 8 H19 M8 13 H19" stroke="#333" stroke-width="1.6"/></svg>
<svg style="left:535px;top:259px;" width="19" height="14" viewBox="0 0 19 14"><path d="M1 2 H3 M1 7 H3 M1 12 H3" stroke="#333" stroke-width="1.8"/><path d="M6 2 H18 M6 7 H18 M6 12 H18" stroke="#333" stroke-width="1.6"/></svg>
<div class="t" style="left:566px;top:253.0px;height:24px;line-height:24px;font-size:15px;color:#333;font-weight:normal;-webkit-text-stroke:0;letter-spacing:-0.5px">ab</div>
<svg style="left:596px;top:256px;" width="18" height="20" viewBox="0 0 18 20"><path d="M2 13.5 L9 1 L16 13.5 M4.5 9.5 H13.5" fill="none" stroke="#333" stroke-width="1.5"/><rect x="1" y="16.5" width="16" height="1.8" fill="#111"/></svg>
<div class="a" style="left:626px;top:228px;width:1px;height:50px;background:#ececf0"></div>
<svg style="left:640px;top:233px;" width="20" height="18" viewBox="0 0 20 18"><path d="M2 8 L9 15 L12 9 L8 5 Z" fill="none" stroke="#333" stroke-width="1.9" stroke-linejoin="round"/><path d="M9 6.5 L14.5 1.5 L16.5 3.5 L11.5 9" fill="#333" stroke="#333" stroke-width="1.6"/></svg>
<div class="t" style="left:625.0px;width:50px;text-align:center;top:259.0px;height:24px;line-height:24px;font-size:11.5px;color:#333;font-weight:normal;">格式刷</div>
<div class="a" style="left:675px;top:228px;width:1px;height:50px;background:#ececf0"></div>
<svg style="left:691px;top:232px;" width="22" height="22" viewBox="0 0 22 22"><circle cx="11" cy="11" r="9.5" fill="none" stroke="#333" stroke-width="1.6"/><circle cx="11" cy="6.5" r="1.3" fill="#333"/><circle cx="11" cy="11" r="1.3" fill="#333"/><circle cx="11" cy="15.5" r="1.3" fill="#333"/></svg>
<div class="t" style="left:677.0px;width:50px;text-align:center;top:259.0px;height:24px;line-height:24px;font-size:11.5px;color:#333;font-weight:normal;">更多</div>
<svg style="left:725px;top:225px;" width="12" height="12" viewBox="0 0 12 12"><path d="M7 1.5 L10.5 5 M8.5 3.5 L5 6 L3.5 5 L2.5 6.5 L5.5 9.5 L7 8.5 L6 7 Z M4 8 L1.5 10.5" fill="none" stroke="#aaa" stroke-width="1"/></svg>
<svg style="left:728px;top:268px;" width="10" height="10" viewBox="0 0 10 10"><path d="M1 4 H4 V1 M9 6 H6 V9" fill="none" stroke="#999" stroke-width="1"/></svg>
<div class="a" style="left:1275px;top:729px;width:89px;height:40px;background:#fff;border-radius:20px;box-shadow:0 2px 10px rgba(0,0,0,0.12)"></div>
<svg style="left:1288px;top:738px" width="22" height="22" viewBox="0 0 22 22"><defs><linearGradient id="wg" x1="0" y1="0" x2="1" y2="1"><stop offset="0" stop-color="#8a45f2"/><stop offset="1" stop-color="#4a6ff8"/></linearGradient></defs><g transform="translate(10.6 11.2) rotate(-45)"><rect x="-2.6" y="-10" width="5.2" height="20" rx="1.6" fill="none" stroke="url(#wg)" stroke-width="1.8"/><path d="M-2.6 -5.5 H2.6" stroke="url(#wg)" stroke-width="1.6"/></g><path d="M17.5 4.5 Q17.8 7.2 20.5 7.5 Q17.8 7.8 17.5 10.5 Q17.2 7.8 14.5 7.5 Q17.2 7.2 17.5 4.5 Z" fill="#4a72f8"/><path d="M11.5 0.5 Q11.7 2.3 13.5 2.5 Q11.7 2.7 11.5 4.5 Q11.3 2.7 9.5 2.5 Q11.3 2.3 11.5 0.5 Z" fill="#6a55f5"/><path d="M4 11.5 Q4.2 13.3 6 13.5 Q4.2 13.7 4 15.5 Q3.8 13.7 2 13.5 Q3.8 13.3 4 11.5 Z" fill="#8a45f2"/></svg>
<div class="a" style="left:1319px;top:737px;width:1px;height:24px;background:#ececf0"></div>
<svg style="left:1329px;top:738px" width="22" height="22" viewBox="0 0 22 22"><defs><linearGradient id="aig2" x1="0" y1="1" x2="1" y2="0"><stop offset="0" stop-color="#7a3cf0"/><stop offset="1" stop-color="#3a6ff8"/></linearGradient></defs><path d="M9 5 Q10 11.5 16.5 12.5 Q10 13.5 9 20 Q8 13.5 1.5 12.5 Q8 11.5 9 5 Z" fill="url(#aig2)"/><path d="M17 1 Q17.4 3.6 20 4 Q17.4 4.4 17 7 Q16.6 4.4 14 4 Q16.6 3.6 17 1 Z" fill="#3a6ff8"/></svg>
<div class="a" style="left:1381px;top:168px;width:14px;height:649px;background:#fff"></div>
<div class="a" style="left:1383px;top:304px;width:10px;height:351px;background:#cfd0d4;border-radius:5px"></div>
<div class="a" style="left:273px;top:786px;width:1108px;height:14px;background:#fff"></div>
<div class="a" style="left:486px;top:788px;width:636px;height:10px;background:#cfd0d4;border-radius:5px"></div>
<div class="a" style="left:273px;top:800px;width:1122px;height:17px;background:#fff;border-top:1px solid #efeff2"></div>
<div class="a" style="left:1383px;top:802px;width:10px;height:14.5px;background:#fff;border:1px solid #f0f0f2;border-radius:3px"></div>
<svg style="left:283px;top:802px;" width="18" height="14" viewBox="0 0 18 14"><path d="M5 1 L7.5 3.5 M2 7 L7 2.5 L12 7.5 L8.5 11.5 Q6 13 4 11 L1.5 8.5 Z" fill="none" stroke="#333" stroke-width="1.6" stroke-linejoin="round"/><path d="M2 8 H11.5 L8.5 11.5 Q6 13 4 11 Z" fill="#333"/><path d="M12.5 10 L13.8 12.2 A1.4 1.4 0 0 1 11.2 12.2 Z" fill="#555"/><path d="M14.5 6 H18 L16.25 8 Z" fill="#777"/></svg>
<div class="a" style="left:273px;top:800px;width:1122px;height:17px;overflow:hidden"><svg style="left:0;top:0" width="1122" height="17"><rect x="35.06" y="1.5" width="9.8" height="14.5" rx="3" fill="#a8141e"/><rect x="47.01" y="1.5" width="9.8" height="14.5" rx="3" fill="#cc0f2f"/><rect x="58.96" y="1.5" width="9.8" height="14.5" rx="3" fill="#e5405e"/><rect x="70.91" y="1.5" width="9.8" height="14.5" rx="3" fill="#f26a85"/><rect x="82.86" y="1.5" width="9.8" height="14.5" rx="3" fill="#f7a1b0"/><rect x="94.81" y="1.5" width="9.8" height="14.5" rx="3" fill="#267a8e"/><rect x="106.76" y="1.5" width="9.8" height="14.5" rx="3" fill="#3aa6c2"/><rect x="118.71" y="1.5" width="9.8" height="14.5" rx="3" fill="#3ebfdf"/><rect x="130.66" y="1.5" width="9.8" height="14.5" rx="3" fill="#5dd8ee"/><rect x="142.61" y="1.5" width="9.8" height="14.5" rx="3" fill="#a6ecfa"/><rect x="154.56" y="1.5" width="9.8" height="14.5" rx="3" fill="#f45325"/><rect x="166.51" y="1.5" width="9.8" height="14.5" rx="3" fill="#fa7d36"/><rect x="178.46" y="1.5" width="9.8" height="14.5" rx="3" fill="#fc951a"/><rect x="190.41" y="1.5" width="9.8" height="14.5" rx="3" fill="#fdb515"/><rect x="202.36" y="1.5" width="9.8" height="14.5" rx="3" fill="#fec45e"/><rect x="214.31" y="1.5" width="9.8" height="14.5" rx="3" fill="#11917a"/><rect x="226.26" y="1.5" width="9.8" height="14.5" rx="3" fill="#17b39b"/><rect x="238.21" y="1.5" width="9.8" height="14.5" rx="3" fill="#1fcbb0"/><rect x="250.16" y="1.5" width="9.8" height="14.5" rx="3" fill="#67d8c6"/><rect x="262.11" y="1.5" width="9.8" height="14.5" rx="3" fill="#8ae8d8"/><rect x="274.06" y="1.5" width="9.8" height="14.5" rx="3" fill="#9c2a5e"/><rect x="286.01" y="1.5" width="9.8" height="14.5" rx="3" fill="#c54b8d"/><rect x="297.96" y="1.5" width="9.8" height="14.5" rx="3" fill="#e36aa7"/><rect x="309.91" y="1.5" width="9.8" height="14.5" rx="3" fill="#f88bc9"/><rect x="321.86" y="1.5" width="9.8" height="14.5" rx="3" fill="#f2c4dd"/><rect x="333.81" y="1.5" width="9.8" height="14.5" rx="3" fill="#5b8516"/><rect x="345.76" y="1.5" width="9.8" height="14.5" rx="3" fill="#73a02d"/><rect x="357.71" y="1.5" width="9.8" height="14.5" rx="3" fill="#9bbb25"/><rect x="369.66" y="1.5" width="9.8" height="14.5" rx="3" fill="#b5cf4e"/><rect x="381.61" y="1.5" width="9.8" height="14.5" rx="3" fill="#d3e196"/><rect x="393.56" y="1.5" width="9.8" height="14.5" rx="3" fill="#1a2aa8"/><rect x="405.51" y="1.5" width="9.8" height="14.5" rx="3" fill="#3046d8"/><rect x="417.46" y="1.5" width="9.8" height="14.5" rx="3" fill="#6c42ea"/><rect x="429.41" y="1.5" width="9.8" height="14.5" rx="3" fill="#8e6ef2"/><rect x="441.36" y="1.5" width="9.8" height="14.5" rx="3" fill="#ab98f5"/><rect x="453.31" y="1.5" width="9.8" height="14.5" rx="3" fill="#fec903"/><rect x="465.26" y="1.5" width="9.8" height="14.5" rx="3" fill="#fde02e"/><rect x="477.21" y="1.5" width="9.8" height="14.5" rx="3" fill="#f1e424"/><rect x="489.16" y="1.5" width="9.8" height="14.5" rx="3" fill="#f8f04b"/><rect x="501.11" y="1.5" width="9.8" height="14.5" rx="3" fill="#fcfa7a"/><rect x="513.06" y="1.5" width="9.8" height="14.5" rx="3" fill="#9b52d8"/><rect x="525.01" y="1.5" width="9.8" height="14.5" rx="3" fill="#c14fe3"/><rect x="536.96" y="1.5" width="9.8" height="14.5" rx="3" fill="#d66bf0"/><rect x="548.91" y="1.5" width="9.8" height="14.5" rx="3" fill="#c48af7"/><rect x="560.86" y="1.5" width="9.8" height="14.5" rx="3" fill="#e0a8fa"/><rect x="572.81" y="1.5" width="9.8" height="14.5" rx="3" fill="#2a7a45"/><rect x="584.76" y="1.5" width="9.8" height="14.5" rx="3" fill="#3a9e55"/><rect x="596.71" y="1.5" width="9.8" height="14.5" rx="3" fill="#4aac78"/><rect x="608.66" y="1.5" width="9.8" height="14.5" rx="3" fill="#5fbd89"/><rect x="620.61" y="1.5" width="9.8" height="14.5" rx="3" fill="#95d6a8"/><rect x="632.56" y="1.5" width="9.8" height="14.5" rx="3" fill="#e03a2c"/><rect x="644.51" y="1.5" width="9.8" height="14.5" rx="3" fill="#fa4a3a"/><rect x="656.46" y="1.5" width="9.8" height="14.5" rx="3" fill="#fd6767"/><rect x="668.41" y="1.5" width="9.8" height="14.5" rx="3" fill="#fd7e7e"/><rect x="680.36" y="1.5" width="9.8" height="14.5" rx="3" fill="#fd9a90"/><rect x="692.31" y="1.5" width="9.8" height="14.5" rx="3" fill="#233f9a"/><rect x="704.26" y="1.5" width="9.8" height="14.5" rx="3" fill="#3458cc"/><rect x="716.21" y="1.5" width="9.8" height="14.5" rx="3" fill="#3569ee"/><rect x="728.16" y="1.5" width="9.8" height="14.5" rx="3" fill="#6b8ff9"/><rect x="740.11" y="1.5" width="9.8" height="14.5" rx="3" fill="#89aef2"/><rect x="752.06" y="1.5" width="9.8" height="14.5" rx="3" fill="#7a2e00"/><rect x="764.01" y="1.5" width="9.8" height="14.5" rx="3" fill="#973700"/><rect x="775.96" y="1.5" width="9.8" height="14.5" rx="3" fill="#ab4425"/><rect x="787.91" y="1.5" width="9.8" height="14.5" rx="3" fill="#cf5f3a"/><rect x="799.86" y="1.5" width="9.8" height="14.5" rx="3" fill="#e37a57"/><rect x="811.81" y="1.5" width="9.8" height="14.5" rx="3" fill="#1888d8"/><rect x="823.76" y="1.5" width="9.8" height="14.5" rx="3" fill="#28a0ef"/><rect x="835.71" y="1.5" width="9.8" height="14.5" rx="3" fill="#43b5fa"/><rect x="847.66" y="1.5" width="9.8" height="14.5" rx="3" fill="#3dd1f8"/><rect x="859.61" y="1.5" width="9.8" height="14.5" rx="3" fill="#62e1fe"/><rect x="871.56" y="1.5" width="9.8" height="14.5" rx="3" fill="#7b4b2c"/><rect x="883.51" y="1.5" width="9.8" height="14.5" rx="3" fill="#9a5f40"/><rect x="895.46" y="1.5" width="9.8" height="14.5" rx="3" fill="#b5714e"/><rect x="907.41" y="1.5" width="9.8" height="14.5" rx="3" fill="#d5865e"/><rect x="919.36" y="1.5" width="9.8" height="14.5" rx="3" fill="#f39a6a"/><rect x="931.31" y="1.5" width="9.8" height="14.5" rx="3" fill="#8a7c70"/><rect x="943.26" y="1.5" width="9.8" height="14.5" rx="3" fill="#b4ac98"/><rect x="955.21" y="1.5" width="9.8" height="14.5" rx="3" fill="#cdcbb8"/><rect x="967.16" y="1.5" width="9.8" height="14.5" rx="3" fill="#e4dece"/><rect x="979.11" y="1.5" width="9.8" height="14.5" rx="3" fill="#f3efdf"/><rect x="991.06" y="1.5" width="9.8" height="14.5" rx="3" fill="#1a1a1a"/><rect x="1003.01" y="1.5" width="9.8" height="14.5" rx="3" fill="#2e2e2e"/><rect x="1014.96" y="1.5" width="9.8" height="14.5" rx="3" fill="#474747"/><rect x="1026.91" y="1.5" width="9.8" height="14.5" rx="3" fill="#5c5c5c"/><rect x="1038.86" y="1.5" width="9.8" height="14.5" rx="3" fill="#7b7b7b"/><rect x="1050.81" y="1.5" width="9.8" height="14.5" rx="3" fill="#b8b8b8"/><rect x="1062.76" y="1.5" width="9.8" height="14.5" rx="3" fill="#cacaca"/><rect x="1074.71" y="1.5" width="9.8" height="14.5" rx="3" fill="#d6d6d6"/><rect x="1086.66" y="1.5" width="9.8" height="14.5" rx="3" fill="#e5e5e5"/><rect x="1098.61" y="1.5" width="9.8" height="14.5" rx="3" fill="#f2f2f2"/><rect x="1110.56" y="1.5" width="9.8" height="14.5" rx="3" fill="#ffffff"/></svg></div>
<svg style="left:19px;top:827px;" width="17" height="12" viewBox="0 0 17 12"><path d="M1 1 V11 M16 1 V11" stroke="#333" stroke-width="1.3"/><rect x="3.5" y="1.5" width="10" height="9" fill="none" stroke="#333" stroke-width="1.3"/></svg>
<div class="a" style="left:48px;top:822px;width:1px;height:22px;background:#e2e3e8"></div>
<div class="a" style="left:178px;top:822px;width:1px;height:22px;background:#e2e3e8"></div>
<div class="a" style="left:218px;top:822px;width:1px;height:22px;background:#e2e3e8"></div>
<div class="a" style="left:291px;top:822px;width:1px;height:22px;background:#e2e3e8"></div>
<div class="t" style="left:65px;top:821.5px;height:24px;line-height:24px;font-size:14px;color:#222;font-weight:normal;-webkit-text-stroke:0;transform:scaleX(0.93);transform-origin:left">Page-1</div>
<svg style="left:158px;top:830.5px;" width="6" height="4" viewBox="0 0 6 4"><path d="M0 0 L6 0 L3 3 Z" fill="#777"/></svg>
<svg style="left:192px;top:827px;" width="12" height="12" viewBox="0 0 12 12"><path d="M6 0.5 V11.5 M0.5 6 H11.5" stroke="#333" stroke-width="1.3"/></svg>
<div class="t" style="left:232px;top:821.5px;height:24px;line-height:24px;font-size:14.5px;color:#1a7cf6;font-weight:bold;-webkit-text-stroke:0;transform:scaleX(0.93);transform-origin:left">Page-1</div>
<div class="a" style="left:1045px;top:822px;width:1px;height:22px;background:#e2e3e8"></div>
<div class="a" style="left:1129px;top:822px;width:1px;height:22px;background:#e2e3e8"></div>
<div class="a" style="left:1216px;top:822px;width:1px;height:22px;background:#e2e3e8"></div>
<div class="a" style="left:1361px;top:822px;width:1px;height:22px;background:#e2e3e8"></div>
<div class="a" style="left:1589px;top:822px;width:1px;height:22px;background:#e2e3e8"></div>
<div class="t" style="left:1053px;top:821.5px;height:24px;line-height:24px;font-size:12px;color:#333;font-weight:normal;">形狀數量：8</div>
<div class="t" style="left:1138px;top:821.5px;height:24px;line-height:24px;font-size:12px;color:#333;font-weight:normal;">形狀ID：115</div>
<svg style="left:1228px;top:824px;" width="18" height="16" viewBox="0 0 18 16"><path d="M9 1.5 L16.5 5.5 L9 9.5 L1.5 5.5 Z" fill="none" stroke="#333" stroke-width="1.3" stroke-linejoin="round"/><path d="M1.5 9 L9 13 L16.5 9" fill="none" stroke="#333" stroke-width="1.3" stroke-linejoin="round"/></svg>
<svg style="left:1250.0px;top:830.75px;" width="5.0" height="3.5" viewBox="0 0 5.0 3.5"><path d="M0 0 L5.0 0 L2.5 2.5 Z" fill="#888"/></svg>
<svg style="left:1271px;top:825px;" width="15" height="15" viewBox="0 0 15 15"><path d="M1 4 V1 H4 M11 1 H14 V4 M14 11 V14 H11 M4 14 H1 V11" fill="none" stroke="#333" stroke-width="1.3"/><rect x="5" y="4.5" width="5" height="6" fill="none" stroke="#333" stroke-width="1.2"/></svg>
<div class="t" style="left:1295px;top:821.5px;height:24px;line-height:24px;font-size:12px;color:#333;font-weight:normal;">專注</div>
<svg style="left:1332px;top:824px;" width="17" height="17" viewBox="0 0 17 17"><circle cx="8.5" cy="8.5" r="7.5" fill="none" stroke="#333" stroke-width="1.3"/><path d="M6.5 5 L11.5 8.5 L6.5 12 Z" fill="none" stroke="#333" stroke-width="1.2" stroke-linejoin="round"/></svg>
<div class="a" style="left:1372px;top:832px;width:11px;height:1.3px;background:#333"></div>
<div class="a" style="left:1394px;top:832px;width:96px;height:2px;background:#e3e3e8;border-radius:1px"></div>
<div class="a" style="left:1394px;top:831px;width:20px;height:3px;background:#222;border-radius:2px"></div>
<svg style="left:1408px;top:826px;" width="14" height="14" viewBox="0 0 14 14"><circle cx="7" cy="7" r="5.8" fill="#fff" stroke="#222" stroke-width="1.6"/></svg>
<svg style="left:1500px;top:827px;" width="12" height="12" viewBox="0 0 12 12"><path d="M6 0.5 V11.5 M0.5 6 H11.5" stroke="#333" stroke-width="1.3"/></svg>
<div class="t" style="left:1533px;top:821.5px;height:24px;line-height:24px;font-size:12.5px;color:#333;font-weight:normal;-webkit-text-stroke:0;">81%</div>
<svg style="left:1571.5px;top:831.25px;" width="5.0" height="3.5" viewBox="0 0 5.0 3.5"><path d="M0 0 L5.0 0 L2.5 2.5 Z" fill="#888"/></svg>
<svg style="left:1601px;top:825px;" width="18" height="15" viewBox="0 0 18 15"><path d="M1 2.5 L6 1 L12 2.5 L17 1 V12.5 L12 14 L6 12.5 L1 14 Z M6 1 V12.5 M12 2.5 V14" fill="none" stroke="#333" stroke-width="1.3" stroke-linejoin="round"/></svg>
<svg style="left:1635px;top:826px;" width="14" height="14" viewBox="0 0 14 14"><path d="M0.7 4.5 V0.7 H4.5 M9.5 0.7 H13.3 V4.5 M13.3 9.5 V13.3 H9.5 M4.5 13.3 H0.7 V9.5" fill="none" stroke="#222" stroke-width="1.3"/><rect x="3.6" y="4.6" width="6.8" height="4.8" fill="none" stroke="#222" stroke-width="1.2"/></svg>
<div class="a" style="left:1395px;top:168px;width:37px;height:649px;background:#fff;border-left:1px solid #e6e6ea;border-right:1px solid #e6e6ea"></div>
<div class="a" style="left:1432px;top:168px;width:238px;height:649px;background:#fff"></div>
<svg style="left:1406px;top:177px;" width="15" height="13" viewBox="0 0 15 13"><path d="M1.5 1 L7 6.5 L1.5 12 M8 1 L13.5 6.5 L8 12" fill="none" stroke="#333" stroke-width="1.6"/></svg>
<div class="a" style="left:1396px;top:200px;width:35px;height:35px;background:#0b7cfd"></div>
<svg style="left:1404px;top:207px;" width="19" height="20" viewBox="0 0 19 20"><path d="M7 1 L9.5 3.5 M3 9 L9 3 L15.5 9.5 L11 14.5 Q8 16.5 5.5 14 L2.5 11 Z" fill="none" stroke="#fff" stroke-width="1.9" stroke-linejoin="round"/><path d="M3 10 H15 L11 14.5 Q8 16.5 5.5 14 Z" fill="#fff"/><path d="M16.5 13 L18 15.5 A1.5 1.5 0 0 1 15 15.5 Z" fill="#fff"/></svg>
<svg style="left:1404px;top:253px;" width="19" height="18" viewBox="0 0 19 18"><path d="M1 1.5 H18" stroke="#333" stroke-width="1.8"/><path d="M2.5 1.5 V12.5 H16.5 V1.5" fill="none" stroke="#333" stroke-width="1.8"/><path d="M7.5 4.5 L12.5 7.2 L7.5 10 Z" fill="#333"/><path d="M6 17 L9.5 12.5 L13 17" fill="none" stroke="#333" stroke-width="1.6"/></svg>
<svg style="left:1404px;top:297px;" width="18" height="18" viewBox="0 0 18 18"><path d="M3 5 A7.2 7.2 0 1 1 2 10" fill="none" stroke="#333" stroke-width="1.8"/><path d="M1 2 V6.2 H5.2" fill="none" stroke="#333" stroke-width="1.8"/><path d="M9.5 5 V9.5 L12.5 12" fill="none" stroke="#333" stroke-width="1.8"/></svg>
<svg style="left:1404px;top:342px;" width="18" height="18" viewBox="0 0 18 18"><circle cx="9" cy="9" r="7.8" fill="none" stroke="#333" stroke-width="1.7"/><path d="M6.5 7 A2.5 2.5 0 1 1 9 9.5 V11" fill="none" stroke="#333" stroke-width="1.7"/><circle cx="9" cy="13.5" r="1" fill="#333"/></svg>
<svg style="left:1404px;top:791px;" width="18" height="18" viewBox="0 0 18 18"><path d="M9 1.5 L11.2 2.9 L13.9 2.8 L14.7 5.4 L16.6 7.4 L15.3 9.8 L15.2 12.6 L12.6 13.3 L10.6 15.6 L9 16.2 L7.4 15.6 L5.4 13.3 L2.8 12.6 L2.7 9.8 L1.4 7.4 L3.3 5.4 L4.1 2.8 L6.8 2.9 Z" fill="none" stroke="#333" stroke-width="1.5" stroke-linejoin="round"/><circle cx="9" cy="9" r="2.8" fill="none" stroke="#333" stroke-width="1.5"/></svg>
<div class="a" style="left:1432px;top:200px;width:238px;height:1px;background:#ececf0"></div>
<div class="t" style="left:1458px;top:173.0px;height:24px;line-height:24px;font-size:13px;color:#1a7cf6;font-weight:normal;">填充</div>
<div class="t" style="left:1544px;top:173.0px;height:24px;line-height:24px;font-size:13px;color:#333;font-weight:normal;">線</div>
<div class="t" style="left:1617px;top:173.0px;height:24px;line-height:24px;font-size:13px;color:#333;font-weight:normal;">陰影</div>
<svg style="left:1452px;top:215px;" width="16" height="16" viewBox="0 0 16 16"><circle cx="8" cy="8" r="6.5" fill="#fff" stroke="#d6d6db" stroke-width="1"/></svg>
<div class="t" style="left:1476px;top:211.5px;height:24px;line-height:24px;font-size:12.5px;color:#333;font-weight:normal;">無填充</div>
<svg style="left:1452px;top:247px;" width="16" height="16" viewBox="0 0 16 16"><circle cx="8" cy="8" r="5.2" fill="#fff" stroke="#1a7cf6" stroke-width="4"/></svg>
<div class="t" style="left:1476px;top:243.5px;height:24px;line-height:24px;font-size:12.5px;color:#333;font-weight:normal;">單色填充</div>
<svg style="left:1452px;top:279px;" width="16" height="16" viewBox="0 0 16 16"><circle cx="8" cy="8" r="6.5" fill="#fff" stroke="#d6d6db" stroke-width="1"/></svg>
<div class="t" style="left:1476px;top:275.5px;height:24px;line-height:24px;font-size:12.5px;color:#333;font-weight:normal;">漸變填充</div>
<svg style="left:1452px;top:311px;" width="16" height="16" viewBox="0 0 16 16"><circle cx="8" cy="8" r="6.5" fill="#fff" stroke="#d6d6db" stroke-width="1"/></svg>
<div class="t" style="left:1476px;top:307.5px;height:24px;line-height:24px;font-size:12.5px;color:#333;font-weight:normal;">單色漸變填充</div>
<svg style="left:1452px;top:343px;" width="16" height="16" viewBox="0 0 16 16"><circle cx="8" cy="8" r="6.5" fill="#fff" stroke="#d6d6db" stroke-width="1"/></svg>
<div class="t" style="left:1476px;top:339.5px;height:24px;line-height:24px;font-size:12.5px;color:#333;font-weight:normal;">圖案填充</div>
<svg style="left:1452px;top:375px;" width="16" height="16" viewBox="0 0 16 16"><circle cx="8" cy="8" r="6.5" fill="#fff" stroke="#d6d6db" stroke-width="1"/></svg>
<div class="t" style="left:1476px;top:371.5px;height:24px;line-height:24px;font-size:12.5px;color:#333;font-weight:normal;">圖片或紋理填充</div>
<div class="t" style="left:1452px;top:409.5px;height:24px;line-height:24px;font-size:13px;color:#333;font-weight:normal;">顏色</div>
<div class="a" style="left:1587px;top:409px;width:63px;height:24px;background:#fff;border:1px solid #dcdce1;border-radius:5px"></div>
<div class="a" style="left:1590px;top:412px;width:57px;height:18px;background:#fff;border:1px solid #e6e6ea;border-radius:3px"></div>
<div class="t" style="left:1452px;top:446.5px;height:24px;line-height:24px;font-size:13px;color:#333;font-weight:normal;">陰影/色調</div>
<div class="a" style="left:1452px;top:487px;width:110px;height:5px;background:#e4e4e8;border-radius:3px"></div>
<div class="a" style="left:1452px;top:487px;width:55px;height:5px;background:#1a7cf6;border-radius:3px"></div>
<svg style="left:1499px;top:481px;" width="16" height="16" viewBox="0 0 16 16"><circle cx="8" cy="8" r="6" fill="#fff" stroke="#1a7cf6" stroke-width="1.8"/></svg>
<div class="a" style="left:1587px;top:477px;width:63px;height:24px;background:#fff;border:1px solid #e6e6ea;border-radius:5px"></div>
<div class="t" style="left:1594px;top:477.5px;height:24px;line-height:24px;font-size:13px;color:#333;font-weight:normal;-webkit-text-stroke:0;">0 %</div>
<svg style="left:1637px;top:482px;" width="6" height="14" viewBox="0 0 6 14"><path d="M0.5 4 L3 0.5 L5.5 4 Z M0.5 10 L3 13.5 L5.5 10 Z" fill="#555"/></svg>
<div class="t" style="left:1452px;top:515.5px;height:24px;line-height:24px;font-size:13px;color:#333;font-weight:normal;">透明度</div>
<div class="a" style="left:1452px;top:556px;width:110px;height:5px;background:#e4e4e8;border-radius:3px"></div>
<svg style="left:1451px;top:550px;" width="16" height="16" viewBox="0 0 16 16"><circle cx="8" cy="8" r="6" fill="#fff" stroke="#1a7cf6" stroke-width="1.8"/></svg>
<div class="a" style="left:1587px;top:546px;width:63px;height:24px;background:#fff;border:1px solid #e6e6ea;border-radius:5px"></div>
<div class="t" style="left:1594px;top:546.5px;height:24px;line-height:24px;font-size:13px;color:#333;font-weight:normal;-webkit-text-stroke:0;">0 %</div>
<svg style="left:1637px;top:551px;" width="6" height="14" viewBox="0 0 6 14"><path d="M0.5 4 L3 0.5 L5.5 4 Z M0.5 10 L3 13.5 L5.5 10 Z" fill="#555"/></svg>
</div>
<div class="a" style="left:0;top:0;width:1670px;height:848px;border-radius:8px;border:1px solid #c2c4ca;border-right-color:#d9dbe0;pointer-events:none"></div>
<div class="a" style="left:1670px;top:0px;width:2px;height:850px;background:linear-gradient(180deg,#79b3c9 0%,#6d9fb3 8%,#6a6a6a 20%,#666 70%,#3d5f3f 92%,#245a4a 100%)"></div>
<div class="a" style="left:0px;top:848px;width:1672px;height:2px;background:linear-gradient(90deg,#2d6f70 0%,#2d6f70 5%,#1f5fd0 5.5%,#1f5fd0 7%,#e8eef5 7.5%,#e8eef5 9%,#2d6f70 9.5%,#2d6f70 40%,#3a3a8a 45%,#2d6f70 50%,#2d6f70 100%)"></div>
</body></html>
